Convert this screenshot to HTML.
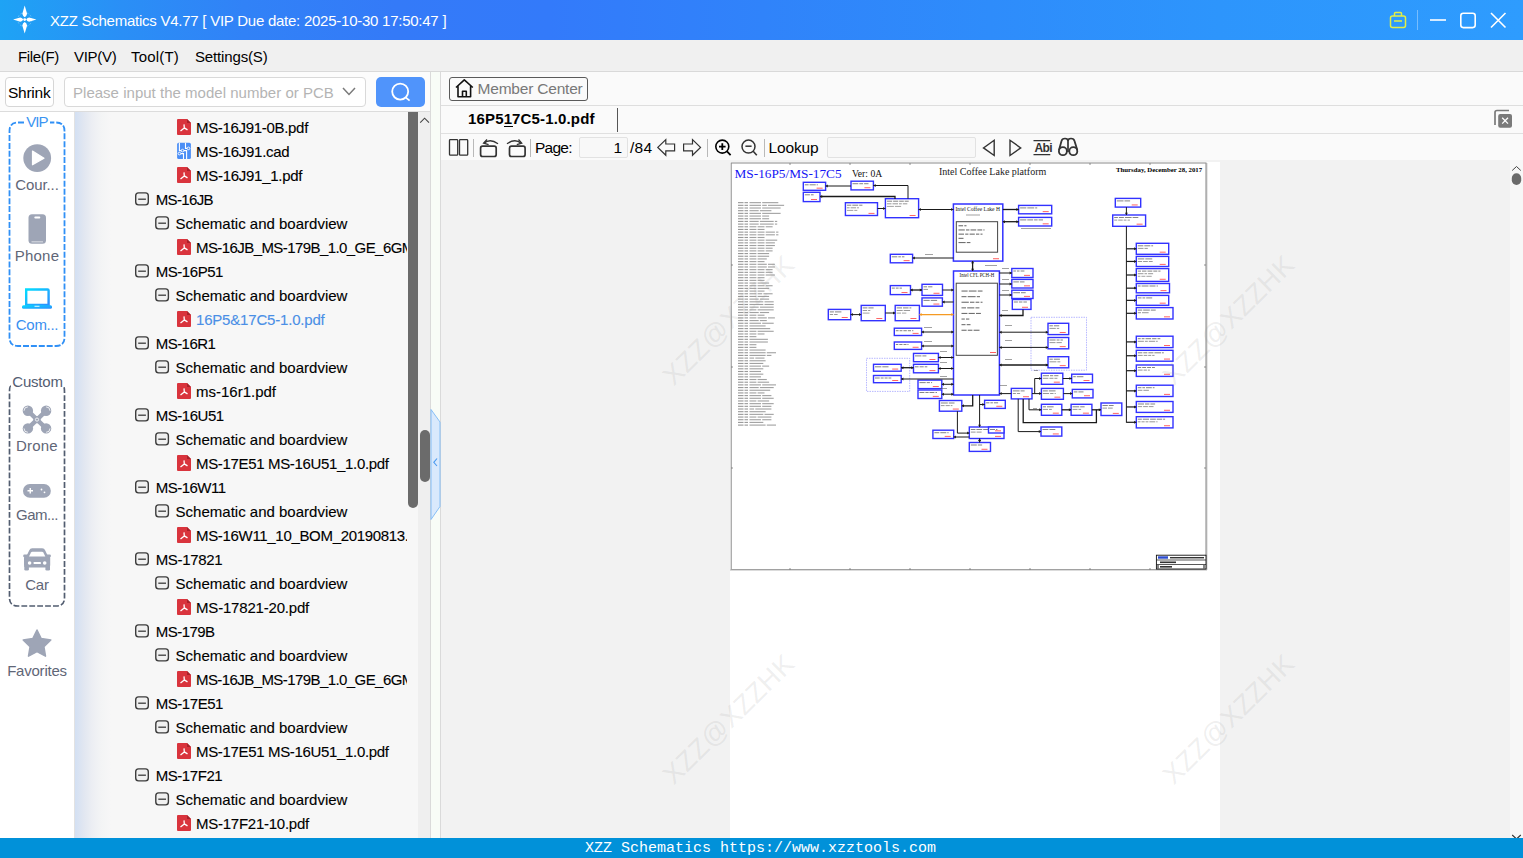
<!DOCTYPE html><html><head><meta charset="utf-8"><style>
*{margin:0;padding:0;box-sizing:border-box}
html,body{width:1523px;height:858px;overflow:hidden;background:#f0f0f0;font-family:"Liberation Sans",sans-serif;color:#000}
.a{position:absolute}
.t{position:absolute;white-space:nowrap;line-height:1}
svg{position:absolute;overflow:visible}
#title{left:0;top:0;width:1523px;height:40px;background:linear-gradient(90deg,#1ea3f5 0%,#2a8ff6 8%,#3182f7 16%,#347af8 26%,#337afa 36%,#3083fa 50%,#2e8cfb 65%,#2d95fc 80%,#2e9cfe 100%)}
#menu{left:0;top:40px;width:1523px;height:32px;background:#f0f0f0;border-bottom:1px solid #d9d9d9}
.menu{font-size:15px;top:49px;color:#000}
#ltool{left:0;top:72px;width:430px;height:40px;background:#fcfcfc;border-bottom:1px solid #dcdcdc}
#side{left:0;top:112px;width:74px;height:726px;background:#fff}
#tree{left:74px;top:112px;width:356px;height:726px;border-left:1px solid #e2e2e2;background:linear-gradient(90deg,#d3e0f3 0px,#e0e6f1 8px,#eceef3 17px,#f3f4f5 26px,#f7f7f7 36px,#f7f7f7 100%)}
#strip{left:430px;top:72px;width:11px;height:766px;background:#f8fcf7;border-left:1px solid #dadada;border-right:1px solid #dadada}
#rtop{left:441px;top:72px;width:1082px;height:88px;background:#fafafa}
#view{left:441px;top:160px;width:1069px;height:678px;background:#f2f2f2}
#vscroll{left:1510px;top:160px;width:13px;height:678px;background:#f7f7f7}
#status{left:0;top:838px;width:1523px;height:20px;background:#0191d9}
.row{position:absolute;font-size:15px;line-height:1;white-space:nowrap;-webkit-text-stroke:0.12px currentColor}
.sl{position:absolute;font-size:15px;line-height:1;white-space:nowrap;color:#5f6677;text-align:center;width:74px;left:0}
</style></head><body>
<div id="title" class="a"></div>
<svg style="left:0;top:0" width="50" height="39" viewBox="0 0 50 39">
<circle cx="24.7" cy="19.6" r="7" fill="none" stroke="rgba(255,255,255,0.35)" stroke-width="0.8" stroke-dasharray="2 1.5"/>
<path d="M24.7 5.6 L27.1 13.8 Q26.6 16.2 24.7 17.2 Q22.8 16.2 22.3 13.8 Z M24.7 33.6 L27.1 25.4 Q26.6 23 24.7 22 Q22.8 23 22.3 25.4 Z M13.1 19.6 L20.3 17.4 Q22.5 17.8 23.2 19.6 Q22.5 21.4 20.3 21.8 Z M36.4 19.6 L29.1 17.4 Q26.9 17.8 26.2 19.6 Q26.9 21.4 29.1 21.8 Z" fill="#fff"/>
<circle cx="24.7" cy="19.6" r="1.4" fill="#fff"/>
</svg>
<div class="t" style="left:50px;top:13.3px;font-size:15px;color:#fff;letter-spacing:-0.25px">XZZ Schematics V4.77 [ VIP Due date: 2025-10-30 17:50:47 ]</div>
<svg style="left:1380px;top:0" width="143" height="39" viewBox="1380 0 143 39">
<rect x="1390.5" y="16" width="15" height="11.5" rx="2" fill="none" stroke="#e3ef45" stroke-width="1.5"/>
<path d="M1394.5 16 V13.5 Q1394.5 12.5 1395.5 12.5 H1400.5 Q1401.5 12.5 1401.5 13.5 V16" fill="none" stroke="#e3ef45" stroke-width="1.5"/>
<line x1="1394" y1="21" x2="1402" y2="21" stroke="#e3ef45" stroke-width="1.5"/>
<line x1="1417.5" y1="10" x2="1417.5" y2="30" stroke="rgba(255,255,255,0.35)" stroke-width="1"/>
<line x1="1430" y1="20" x2="1446" y2="20" stroke="#fff" stroke-width="1.6"/>
<rect x="1460.8" y="13.2" width="14.4" height="14.4" rx="2.5" fill="none" stroke="#fff" stroke-width="1.6"/>
<path d="M1491 13 L1505.5 27.5 M1505.5 13 L1491 27.5" stroke="#fff" stroke-width="1.6"/>
</svg>
<div id="menu" class="a"></div>
<div class="t menu" style="left:18px;letter-spacing:-0.35px">File(F)</div>
<div class="t menu" style="left:74px;letter-spacing:-0.3px">VIP(V)</div>
<div class="t menu" style="left:131px;letter-spacing:0.2px">Tool(T)</div>
<div class="t menu" style="left:195px;letter-spacing:-0.15px">Settings(S)</div>
<div id="ltool" class="a"></div>
<div class="a" style="left:5px;top:77px;width:49px;height:30px;border:1px solid #d6d6d6;border-radius:4px;background:#fff"></div>
<div class="t" style="left:8px;top:85px;font-size:15.5px;letter-spacing:-0.25px">Shrink</div>
<div class="a" style="left:64px;top:77px;width:302px;height:30px;border:1px solid #d9d9d9;border-radius:4px;background:#fff"></div>
<div class="t" style="left:73px;top:85px;font-size:15px;color:#b4b4b4;letter-spacing:0.02px">Please input the model number or PCB</div>
<svg style="left:340px;top:84px" width="18" height="14" viewBox="340 84 18 14"><path d="M343 88 L349 94.5 L355 88" fill="none" stroke="#7a7a7a" stroke-width="1.5"/></svg>
<div class="a" style="left:376px;top:77px;width:49px;height:30px;border-radius:5px;background:#5094fb"></div>
<svg style="left:376px;top:77px" width="49" height="30" viewBox="376 77 49 30"><circle cx="400.2" cy="91.6" r="8" fill="none" stroke="#fff" stroke-width="1.8"/><line x1="405.6" y1="97.4" x2="409.6" y2="100.6" stroke="#fff" stroke-width="1.8"/></svg>
<div id="side" class="a"></div>
<svg style="left:0;top:112px" width="74" height="560" viewBox="0 112 74 560">
<path d="M24 122.5 H18 Q9.5 122.5 9.5 131 V337.5 Q9.5 346 18 346 H56 Q64.5 346 64.5 337.5 V131 Q64.5 122.5 56 122.5 H50" fill="none" stroke="#3090f6" stroke-width="1.8" stroke-dasharray="6 1.9"/>
<path d="M11 386 Q9.5 386 9.5 392 V598 Q9.5 606 18 606 H56 Q64.5 606 64.5 598 V392 Q64.5 386 63 386" fill="none" stroke="#525d70" stroke-width="1.7" stroke-dasharray="5.8 2.1"/>
<circle cx="37.2" cy="158.1" r="13.9" fill="#9ea5b6"/>
<path d="M32.5 151 L44 158.3 L32.5 164.8 Z" fill="#fff" stroke="#fff" stroke-width="1.2" stroke-linejoin="round"/>
<rect x="28.5" y="214.3" width="17.5" height="29.4" rx="3.5" fill="#9ea5b6"/>
<rect x="34.3" y="216.5" width="6" height="2" rx="1" fill="#fff"/>
<rect x="31.5" y="241.4" width="11.5" height="0.9" fill="#e4e6ec"/>
<defs><linearGradient id="lg" x1="0" x2="1" y1="0" y2="1"><stop offset="0" stop-color="#04dcff"/><stop offset="1" stop-color="#2e8cff"/></linearGradient></defs>
<path d="M26.2 289.5 H47.6 Q48.6 289.5 48.6 290.5 V305 H26.2 Z" fill="none" stroke="url(#lg)" stroke-width="2.4"/>
<rect x="22" y="305.3" width="30" height="3.4" rx="1.5" fill="url(#lg)"/>
<rect x="34.5" y="305.8" width="5" height="0.9" fill="#fff"/>
<g stroke="#9ea5b6" stroke-width="4.4" stroke-linecap="round"><line x1="28" y1="410.8" x2="46" y2="428.3"/><line x1="46" y1="410.8" x2="28" y2="428.3"/></g>
<g fill="#9ea5b6"><circle cx="27.9" cy="410.8" r="5.2"/><circle cx="46.1" cy="410.8" r="5.2"/><circle cx="27.9" cy="428.4" r="5.2"/><circle cx="46.1" cy="428.4" r="5.2"/><circle cx="37" cy="419.6" r="3.6"/></g>
<g fill="none" stroke="#fff" stroke-width="0.8"><path d="M24 410.8 A3.9 3.9 0 0 1 27.9 406.9"/><path d="M46.1 406.9 A3.9 3.9 0 0 1 50 410.8"/><path d="M24 428.4 A3.9 3.9 0 0 0 27.9 432.3"/><path d="M50 428.4 A3.9 3.9 0 0 1 46.1 432.3"/><circle cx="37" cy="419.6" r="1.6"/></g>
<rect x="23" y="484" width="27.8" height="13.7" rx="6.8" fill="#9ea5b6"/>
<path d="M27.5 490.8 H33 M30.25 488 V493.6" stroke="#fff" stroke-width="1.4"/>
<circle cx="41.5" cy="489.5" r="0.9" fill="#fff"/><circle cx="44.5" cy="492.3" r="0.9" fill="#fff"/>
<path d="M26.5 556 L29.3 550.3 Q30 548.3 32.2 548.3 H42.2 Q44.4 548.3 45.1 550.3 L47.9 556 Z" fill="#9ea5b6"/>
<rect x="23.2" y="554.6" width="27.7" height="2.6" rx="1.2" fill="#9ea5b6"/>
<rect x="24" y="555.5" width="26.2" height="12" rx="2.5" fill="#9ea5b6"/>
<rect x="24.3" y="565" width="4.6" height="5.6" rx="1.3" fill="#9ea5b6"/><rect x="45.4" y="565" width="4.6" height="5.6" rx="1.3" fill="#9ea5b6"/>
<path d="M29 556.6 L31 552.6 Q31.4 551.8 32.3 551.8 H42 Q42.9 551.8 43.3 552.6 L45.3 556.6 Z" fill="#fff"/>
<circle cx="29.6" cy="563" r="1.8" fill="#fff"/><circle cx="44.7" cy="563" r="1.8" fill="#fff"/>
<rect x="33.6" y="562" width="7.3" height="2" rx="0.6" fill="#fff"/>
<path d="M37 630 L41.2 638.6 L50.8 640 L43.9 646.7 L45.5 656.2 L37 651.7 L28.5 656.2 L30.1 646.7 L23.2 640 L32.8 638.6 Z" fill="#9ea5b6" stroke="#9ea5b6" stroke-width="1.5" stroke-linejoin="round"/>
</svg>
<div class="sl" style="top:114.0px;color:#3a94f2;font-size:15px;left:0px;letter-spacing:-0.9px"><span style="background:#fff;padding:0 1px">VIP</span></div>
<div class="sl" style="top:177.1px;color:#5f6677;letter-spacing:-0.1px">Cour...</div>
<div class="sl" style="top:247.9px;color:#5f6677;letter-spacing:0.2px">Phone</div>
<div class="sl" style="top:317.3px;color:#3a8ff0;letter-spacing:-0.3px">Com...</div>
<div class="sl" style="top:437.5px;color:#5f6677;letter-spacing:0.2px">Drone</div>
<div class="sl" style="top:507.2px;color:#5f6677;letter-spacing:-0.5px">Gam...</div>
<div class="sl" style="top:576.7px;color:#5f6677;letter-spacing:-0.2px">Car</div>
<div class="sl" style="top:662.7px;color:#5f6677;letter-spacing:-0.22px">Favorites</div>
<div class="sl" style="top:374.4px;color:#535d72;letter-spacing:-0.2px;left:0.5px"><span style="background:#fff;padding:0 0px">Custom</span></div>
<div id="tree" class="a"></div>
<div class="a" style="left:74px;top:112px;width:333px;height:726px;overflow:hidden">
<div class="row" style="left:122.0px;top:7.8px;color:#000;letter-spacing:-0.315px">MS-16J91-0B.pdf</div>
<div class="row" style="left:122.0px;top:31.8px;color:#000;letter-spacing:-0.278px">MS-16J91.cad</div>
<div class="row" style="left:122.0px;top:55.8px;color:#000;letter-spacing:-0.279px">MS-16J91_1.pdf</div>
<div class="row" style="left:81.7px;top:79.8px;color:#000;letter-spacing:-0.637px">MS-16JB</div>
<div class="row" style="left:101.6px;top:103.8px;color:#000;letter-spacing:0.003px">Schematic and boardview</div>
<div class="row" style="left:122.0px;top:127.8px;color:#000;letter-spacing:-0.575px">MS-16JB_MS-179B_1.0_GE_6GM_BOM.pdf</div>
<div class="row" style="left:81.7px;top:151.8px;color:#000;letter-spacing:-0.448px">MS-16P51</div>
<div class="row" style="left:101.6px;top:175.8px;color:#000;letter-spacing:0.003px">Schematic and boardview</div>
<div class="row" style="left:122.0px;top:199.8px;color:#4a8fe6;letter-spacing:-0.189px">16P5&amp;17C5-1.0.pdf</div>
<div class="row" style="left:81.7px;top:223.8px;color:#000;letter-spacing:-0.531px">MS-16R1</div>
<div class="row" style="left:101.6px;top:247.8px;color:#000;letter-spacing:0.003px">Schematic and boardview</div>
<div class="row" style="left:122.0px;top:271.8px;color:#000;letter-spacing:0.001px">ms-16r1.pdf</div>
<div class="row" style="left:81.7px;top:295.8px;color:#000;letter-spacing:-0.459px">MS-16U51</div>
<div class="row" style="left:101.6px;top:319.8px;color:#000;letter-spacing:0.003px">Schematic and boardview</div>
<div class="row" style="left:122.0px;top:343.8px;color:#000;letter-spacing:-0.335px">MS-17E51 MS-16U51_1.0.pdf</div>
<div class="row" style="left:81.7px;top:367.8px;color:#000;letter-spacing:-0.503px">MS-16W11</div>
<div class="row" style="left:101.6px;top:391.8px;color:#000;letter-spacing:0.003px">Schematic and boardview</div>
<div class="row" style="left:122.0px;top:415.8px;color:#000;letter-spacing:-0.320px">MS-16W11_10_BOM_20190813.pdf</div>
<div class="row" style="left:81.7px;top:439.8px;color:#000;letter-spacing:-0.312px">MS-17821</div>
<div class="row" style="left:101.6px;top:463.8px;color:#000;letter-spacing:0.003px">Schematic and boardview</div>
<div class="row" style="left:122.0px;top:487.8px;color:#000;letter-spacing:-0.187px">MS-17821-20.pdf</div>
<div class="row" style="left:81.7px;top:511.8px;color:#000;letter-spacing:-0.518px">MS-179B</div>
<div class="row" style="left:101.6px;top:535.8px;color:#000;letter-spacing:0.003px">Schematic and boardview</div>
<div class="row" style="left:122.0px;top:559.8px;color:#000;letter-spacing:-0.575px">MS-16JB_MS-179B_1.0_GE_6GM_BOM.pdf</div>
<div class="row" style="left:81.7px;top:583.8px;color:#000;letter-spacing:-0.448px">MS-17E51</div>
<div class="row" style="left:101.6px;top:607.8px;color:#000;letter-spacing:0.003px">Schematic and boardview</div>
<div class="row" style="left:122.0px;top:631.8px;color:#000;letter-spacing:-0.335px">MS-17E51 MS-16U51_1.0.pdf</div>
<div class="row" style="left:81.7px;top:655.8px;color:#000;letter-spacing:-0.437px">MS-17F21</div>
<div class="row" style="left:101.6px;top:679.8px;color:#000;letter-spacing:0.003px">Schematic and boardview</div>
<div class="row" style="left:122.0px;top:703.8px;color:#000;letter-spacing:-0.254px">MS-17F21-10.pdf</div>
</div>
<svg style="left:0;top:0" width="430" height="858" viewBox="0 0 430 858"><path d="M177.0 119.9 Q177.0 118.9 178.0 118.9 H187.0 L191.0 122.9 V133.9 Q191.0 134.9 190.0 134.9 H178.0 Q177.0 134.9 177.0 133.9 Z" fill="#d9343d"/><path d="M187.0 118.9 V122.9 H191.0 Z" fill="#a8222a"/><path d="M184.0 124.4 L184.3 127.9 M184.3 127.9 L180.5 130.9 M184.3 127.9 L187.5 129.9" stroke="#fff" stroke-width="1.3" fill="none"/><rect x="177.1" y="142.7" width="13.8" height="16.2" rx="1.5" fill="#4b8ef5"/><path d="M179.4 142.7 V150.6 H186.6 V158.9 M185.5 142.7 V148.4 H187.0 M180.8 153.6 H183.5 V158.9" stroke="#fff" stroke-width="1.1" fill="none"/><circle cx="182.5" cy="150.6" r="1.3" fill="#4b8ef5" stroke="#fff" stroke-width="0.9"/><circle cx="188.5" cy="148.4" r="1.3" fill="#4b8ef5" stroke="#fff" stroke-width="0.9"/><circle cx="179.4" cy="153.6" r="1.3" fill="#4b8ef5" stroke="#fff" stroke-width="0.9"/><path d="M177.0 167.9 Q177.0 166.9 178.0 166.9 H187.0 L191.0 170.9 V181.9 Q191.0 182.9 190.0 182.9 H178.0 Q177.0 182.9 177.0 181.9 Z" fill="#d9343d"/><path d="M187.0 166.9 V170.9 H191.0 Z" fill="#a8222a"/><path d="M184.0 172.4 L184.3 175.9 M184.3 175.9 L180.5 178.9 M184.3 175.9 L187.5 177.9" stroke="#fff" stroke-width="1.3" fill="none"/><rect x="135.7" y="192.9" width="12.6" height="12" rx="2.8" fill="#f0f0f0" stroke="#3c3c3c" stroke-width="1.4"/><line x1="138.2" y1="199.2" x2="145.9" y2="199.2" stroke="#3c3c3c" stroke-width="1.3"/><rect x="155.8" y="216.9" width="12.6" height="12" rx="2.8" fill="#f0f0f0" stroke="#3c3c3c" stroke-width="1.4"/><line x1="158.3" y1="223.2" x2="166.0" y2="223.2" stroke="#3c3c3c" stroke-width="1.3"/><path d="M177.0 239.9 Q177.0 238.9 178.0 238.9 H187.0 L191.0 242.9 V253.9 Q191.0 254.9 190.0 254.9 H178.0 Q177.0 254.9 177.0 253.9 Z" fill="#d9343d"/><path d="M187.0 238.9 V242.9 H191.0 Z" fill="#a8222a"/><path d="M184.0 244.4 L184.3 247.9 M184.3 247.9 L180.5 250.9 M184.3 247.9 L187.5 249.9" stroke="#fff" stroke-width="1.3" fill="none"/><rect x="135.7" y="264.9" width="12.6" height="12" rx="2.8" fill="#f0f0f0" stroke="#3c3c3c" stroke-width="1.4"/><line x1="138.2" y1="271.2" x2="145.9" y2="271.2" stroke="#3c3c3c" stroke-width="1.3"/><rect x="155.8" y="288.9" width="12.6" height="12" rx="2.8" fill="#f0f0f0" stroke="#3c3c3c" stroke-width="1.4"/><line x1="158.3" y1="295.2" x2="166.0" y2="295.2" stroke="#3c3c3c" stroke-width="1.3"/><path d="M177.0 311.9 Q177.0 310.9 178.0 310.9 H187.0 L191.0 314.9 V325.9 Q191.0 326.9 190.0 326.9 H178.0 Q177.0 326.9 177.0 325.9 Z" fill="#d9343d"/><path d="M187.0 310.9 V314.9 H191.0 Z" fill="#a8222a"/><path d="M184.0 316.4 L184.3 319.9 M184.3 319.9 L180.5 322.9 M184.3 319.9 L187.5 321.9" stroke="#fff" stroke-width="1.3" fill="none"/><rect x="135.7" y="336.9" width="12.6" height="12" rx="2.8" fill="#f0f0f0" stroke="#3c3c3c" stroke-width="1.4"/><line x1="138.2" y1="343.2" x2="145.9" y2="343.2" stroke="#3c3c3c" stroke-width="1.3"/><rect x="155.8" y="360.9" width="12.6" height="12" rx="2.8" fill="#f0f0f0" stroke="#3c3c3c" stroke-width="1.4"/><line x1="158.3" y1="367.2" x2="166.0" y2="367.2" stroke="#3c3c3c" stroke-width="1.3"/><path d="M177.0 383.9 Q177.0 382.9 178.0 382.9 H187.0 L191.0 386.9 V397.9 Q191.0 398.9 190.0 398.9 H178.0 Q177.0 398.9 177.0 397.9 Z" fill="#d9343d"/><path d="M187.0 382.9 V386.9 H191.0 Z" fill="#a8222a"/><path d="M184.0 388.4 L184.3 391.9 M184.3 391.9 L180.5 394.9 M184.3 391.9 L187.5 393.9" stroke="#fff" stroke-width="1.3" fill="none"/><rect x="135.7" y="408.9" width="12.6" height="12" rx="2.8" fill="#f0f0f0" stroke="#3c3c3c" stroke-width="1.4"/><line x1="138.2" y1="415.2" x2="145.9" y2="415.2" stroke="#3c3c3c" stroke-width="1.3"/><rect x="155.8" y="432.9" width="12.6" height="12" rx="2.8" fill="#f0f0f0" stroke="#3c3c3c" stroke-width="1.4"/><line x1="158.3" y1="439.2" x2="166.0" y2="439.2" stroke="#3c3c3c" stroke-width="1.3"/><path d="M177.0 455.9 Q177.0 454.9 178.0 454.9 H187.0 L191.0 458.9 V469.9 Q191.0 470.9 190.0 470.9 H178.0 Q177.0 470.9 177.0 469.9 Z" fill="#d9343d"/><path d="M187.0 454.9 V458.9 H191.0 Z" fill="#a8222a"/><path d="M184.0 460.4 L184.3 463.9 M184.3 463.9 L180.5 466.9 M184.3 463.9 L187.5 465.9" stroke="#fff" stroke-width="1.3" fill="none"/><rect x="135.7" y="480.9" width="12.6" height="12" rx="2.8" fill="#f0f0f0" stroke="#3c3c3c" stroke-width="1.4"/><line x1="138.2" y1="487.2" x2="145.9" y2="487.2" stroke="#3c3c3c" stroke-width="1.3"/><rect x="155.8" y="504.9" width="12.6" height="12" rx="2.8" fill="#f0f0f0" stroke="#3c3c3c" stroke-width="1.4"/><line x1="158.3" y1="511.2" x2="166.0" y2="511.2" stroke="#3c3c3c" stroke-width="1.3"/><path d="M177.0 527.9 Q177.0 526.9 178.0 526.9 H187.0 L191.0 530.9 V541.9 Q191.0 542.9 190.0 542.9 H178.0 Q177.0 542.9 177.0 541.9 Z" fill="#d9343d"/><path d="M187.0 526.9 V530.9 H191.0 Z" fill="#a8222a"/><path d="M184.0 532.4 L184.3 535.9 M184.3 535.9 L180.5 538.9 M184.3 535.9 L187.5 537.9" stroke="#fff" stroke-width="1.3" fill="none"/><rect x="135.7" y="552.9" width="12.6" height="12" rx="2.8" fill="#f0f0f0" stroke="#3c3c3c" stroke-width="1.4"/><line x1="138.2" y1="559.2" x2="145.9" y2="559.2" stroke="#3c3c3c" stroke-width="1.3"/><rect x="155.8" y="576.9" width="12.6" height="12" rx="2.8" fill="#f0f0f0" stroke="#3c3c3c" stroke-width="1.4"/><line x1="158.3" y1="583.2" x2="166.0" y2="583.2" stroke="#3c3c3c" stroke-width="1.3"/><path d="M177.0 599.9 Q177.0 598.9 178.0 598.9 H187.0 L191.0 602.9 V613.9 Q191.0 614.9 190.0 614.9 H178.0 Q177.0 614.9 177.0 613.9 Z" fill="#d9343d"/><path d="M187.0 598.9 V602.9 H191.0 Z" fill="#a8222a"/><path d="M184.0 604.4 L184.3 607.9 M184.3 607.9 L180.5 610.9 M184.3 607.9 L187.5 609.9" stroke="#fff" stroke-width="1.3" fill="none"/><rect x="135.7" y="624.9" width="12.6" height="12" rx="2.8" fill="#f0f0f0" stroke="#3c3c3c" stroke-width="1.4"/><line x1="138.2" y1="631.2" x2="145.9" y2="631.2" stroke="#3c3c3c" stroke-width="1.3"/><rect x="155.8" y="648.9" width="12.6" height="12" rx="2.8" fill="#f0f0f0" stroke="#3c3c3c" stroke-width="1.4"/><line x1="158.3" y1="655.2" x2="166.0" y2="655.2" stroke="#3c3c3c" stroke-width="1.3"/><path d="M177.0 671.9 Q177.0 670.9 178.0 670.9 H187.0 L191.0 674.9 V685.9 Q191.0 686.9 190.0 686.9 H178.0 Q177.0 686.9 177.0 685.9 Z" fill="#d9343d"/><path d="M187.0 670.9 V674.9 H191.0 Z" fill="#a8222a"/><path d="M184.0 676.4 L184.3 679.9 M184.3 679.9 L180.5 682.9 M184.3 679.9 L187.5 681.9" stroke="#fff" stroke-width="1.3" fill="none"/><rect x="135.7" y="696.9" width="12.6" height="12" rx="2.8" fill="#f0f0f0" stroke="#3c3c3c" stroke-width="1.4"/><line x1="138.2" y1="703.2" x2="145.9" y2="703.2" stroke="#3c3c3c" stroke-width="1.3"/><rect x="155.8" y="720.9" width="12.6" height="12" rx="2.8" fill="#f0f0f0" stroke="#3c3c3c" stroke-width="1.4"/><line x1="158.3" y1="727.2" x2="166.0" y2="727.2" stroke="#3c3c3c" stroke-width="1.3"/><path d="M177.0 743.9 Q177.0 742.9 178.0 742.9 H187.0 L191.0 746.9 V757.9 Q191.0 758.9 190.0 758.9 H178.0 Q177.0 758.9 177.0 757.9 Z" fill="#d9343d"/><path d="M187.0 742.9 V746.9 H191.0 Z" fill="#a8222a"/><path d="M184.0 748.4 L184.3 751.9 M184.3 751.9 L180.5 754.9 M184.3 751.9 L187.5 753.9" stroke="#fff" stroke-width="1.3" fill="none"/><rect x="135.7" y="768.9" width="12.6" height="12" rx="2.8" fill="#f0f0f0" stroke="#3c3c3c" stroke-width="1.4"/><line x1="138.2" y1="775.2" x2="145.9" y2="775.2" stroke="#3c3c3c" stroke-width="1.3"/><rect x="155.8" y="792.9" width="12.6" height="12" rx="2.8" fill="#f0f0f0" stroke="#3c3c3c" stroke-width="1.4"/><line x1="158.3" y1="799.2" x2="166.0" y2="799.2" stroke="#3c3c3c" stroke-width="1.3"/><path d="M177.0 815.9 Q177.0 814.9 178.0 814.9 H187.0 L191.0 818.9 V829.9 Q191.0 830.9 190.0 830.9 H178.0 Q177.0 830.9 177.0 829.9 Z" fill="#d9343d"/><path d="M187.0 814.9 V818.9 H191.0 Z" fill="#a8222a"/><path d="M184.0 820.4 L184.3 823.9 M184.3 823.9 L180.5 826.9 M184.3 823.9 L187.5 825.9" stroke="#fff" stroke-width="1.3" fill="none"/></svg>
<div class="a" style="left:417.5px;top:112px;width:13px;height:726px;background:#efefef"></div>
<div class="a" style="left:407.5px;top:112px;width:10px;height:395.5px;background:#6b6b6b;border-radius:0 0 5px 5px"></div>
<div class="a" style="left:419.5px;top:429.5px;width:10px;height:52px;background:#6b6b6b;border-radius:5px"></div>
<svg style="left:415px;top:112px" width="16" height="14" viewBox="415 112 16 14"><path d="M420.2 122.6 L424.6 118.2 L429 122.6" fill="none" stroke="#444" stroke-width="1.1"/></svg>
<div id="strip" class="a"></div>
<svg style="left:430px;top:400px" width="12" height="130" viewBox="430 400 12 130"><path d="M431 409.5 L440 422 V506.5 L431 519.5 Z" fill="#d9e9fc" stroke="#7cb9f6" stroke-width="0.9"/><path d="M437 458.5 L433.8 462.3 L437 466" fill="none" stroke="#4a9af0" stroke-width="1.1"/></svg>
<div id="rtop" class="a"></div>
<div class="a" style="left:441px;top:105px;width:1082px;height:1px;background:#dedede"></div>
<div class="a" style="left:441px;top:133px;width:1082px;height:1px;background:#e0e0e0"></div>
<div class="a" style="left:449px;top:77px;width:139px;height:24px;border:1px solid #5a5a5a;border-radius:3px;background:#fafafa"></div>
<svg style="left:450px;top:78px" width="30" height="22" viewBox="450 78 30 22"><path d="M456 87.5 L464.3 79.8 L472.8 87.5 M458 86.2 V96.8 H470.6 V86.2 M462.5 96.8 V91.2 H466.3 V96.8" fill="none" stroke="#111" stroke-width="1.6" stroke-linejoin="round"/></svg>
<div class="t" style="left:477.5px;top:81px;font-size:15.5px;color:#787878;letter-spacing:-0.2px">Member Center</div>
<div class="t" style="left:468px;top:111px;font-size:15px;font-weight:bold;letter-spacing:0.15px">16P517C5-1.0.pdf</div>
<div class="a" style="left:504px;top:125.5px;width:9px;height:1.3px;background:#000"></div>
<div class="a" style="left:616.5px;top:108px;width:1px;height:24px;background:#555"></div>
<svg style="left:1490px;top:105px" width="26" height="28" viewBox="1490 105 26 28"><path d="M1495 125 V112.5 Q1495 110.5 1497 110.5 H1509" fill="none" stroke="#7a7a7a" stroke-width="1.7"/><rect x="1498.2" y="114" width="13.8" height="13.8" rx="2" fill="#7a7a7a"/><path d="M1502.2 117.8 L1508 123.6 M1508 117.8 L1502.2 123.6" stroke="#fff" stroke-width="1.3"/></svg>
<svg style="left:441px;top:134px" width="660" height="26" viewBox="441 134 660 26">
<g fill="none" stroke="#333" stroke-width="1.3">
<rect x="449.5" y="139.6" width="8.2" height="15.6" rx="0.8"/><rect x="459.5" y="139.6" width="8.2" height="15.6" rx="0.8"/>
<rect x="480.6" y="146.2" width="15.6" height="10.3" rx="2" stroke-width="1.7"/>
<path d="M484 143.3 Q490 138 498 143.8" stroke-width="1.3"/>
<path d="M487 139.5 L483.6 143.2 L488.6 144.6" stroke-width="1.3"/>
<rect x="509.5" y="146.2" width="15.6" height="10.3" rx="2" stroke-width="1.7"/>
<path d="M507 143.8 Q515 138 521 143.3" stroke-width="1.3"/>
<path d="M518.5 139.5 L521.7 143.2 L516.8 144.6" stroke-width="1.3"/>
<path d="M657.8 147.4 L665.8 139.6 V144 H674.6 V150.8 H665.8 V155.3 Z" stroke-width="1.2" stroke-linejoin="miter"/>
<path d="M700.5 147.4 L692.5 139.6 V144 H683.6 V150.8 H692.5 V155.3 Z" stroke-width="1.2"/>
<circle cx="722.3" cy="146.6" r="6.5" stroke="#000" stroke-width="1.6"/><path d="M727 151.3 L730.6 155.2" stroke="#000" stroke-width="1.7"/><path d="M719 146.6 H725.6 M722.3 143.3 V149.9" stroke="#000" stroke-width="1.8"/>
<circle cx="748.5" cy="146.6" r="6.5" stroke-width="1.5"/><path d="M753.2 151.3 L756.8 155.2" stroke-width="1.6"/><path d="M745.4 146.2 H751.6" stroke-width="1.5"/>
<path d="M994.2 140.3 L983.5 147.9 L994.2 155.5 Z" stroke-width="1.4"/>
<path d="M1010 140.3 L1020.7 147.9 L1010 155.5 Z" stroke-width="1.4"/>
<path d="M1033.5 140.6 H1050.3 M1033.5 154.6 H1050.3" stroke-width="1.2"/>
<path d="M1061.5 141 Q1062 138.5 1065 138.5 Q1068 138.5 1068 141 V152 M1068 141 Q1068 138.5 1071 138.5 Q1074 138.5 1074.5 141" stroke-width="1.7"/>
<circle cx="1062.9" cy="151.2" r="4" stroke-width="1.8"/><circle cx="1073.3" cy="151.2" r="4" stroke-width="1.8"/>
<path d="M1059 150 L1061.5 141 M1077.3 150 L1074.5 141" stroke-width="1.8"/>
</g>
<g fill="#b9b9b9"><rect x="473" y="139" width="1" height="18"/><rect x="530" y="139" width="1" height="18"/><rect x="707" y="139" width="1" height="18"/><rect x="764" y="139" width="1" height="18"/></g>
</svg>
<div class="t" style="left:1034.5px;top:142px;font-size:12px;font-weight:bold;color:#333;letter-spacing:-0.6px">Abi</div>
<div class="t" style="left:535px;top:140px;font-size:15.5px;letter-spacing:-0.75px">Page:</div>
<div class="a" style="left:579px;top:137px;width:49px;height:21px;border:1px solid #e2e2e2;border-radius:2px;background:#f8f8f8"></div>
<div class="t" style="left:613.5px;top:140px;font-size:15.5px">1</div>
<div class="t" style="left:630px;top:140px;font-size:15.5px;letter-spacing:0.3px">/84</div>
<div class="t" style="left:768.4px;top:140px;font-size:15.5px;letter-spacing:-0.1px">Lookup</div>
<div class="a" style="left:826.5px;top:136.5px;width:149px;height:21px;border:1px solid #e2e2e2;border-radius:2px;background:#f8f8f8"></div>
<div id="view" class="a"></div>
<div id="vscroll" class="a"></div>
<svg style="left:1510px;top:160px" width="13" height="678" viewBox="1510 160 13 678"><path d="M1512.2 170.5 L1516.5 166.5 L1520.8 170.5" fill="none" stroke="#444" stroke-width="1"/><rect x="1511.8" y="173.3" width="9.4" height="11.6" rx="4.7" fill="#6b6b6b"/><path d="M1512.2 835 L1516.5 839 L1520.8 835" fill="none" stroke="#333" stroke-width="1.1"/></svg>
<div class="a" style="left:730px;top:162px;width:490px;height:676px;background:#fff"></div>
<svg style="left:720px;top:155px" width="500" height="430" viewBox="720 155 500 430">
<rect x="731.2" y="163" width="474.8" height="406.5" fill="#fff" stroke="#8a8a8a" stroke-width="1"/>
<line x1="1206.6" y1="163" x2="1206.6" y2="570" stroke="#b0b0b0" stroke-width="1.4"/>
<line x1="730" y1="570" x2="1207" y2="570" stroke="#b8b8b8" stroke-width="1"/>
<line x1="790" y1="163" x2="790" y2="165" stroke="#777" stroke-width="0.8"/>
<line x1="790" y1="568" x2="790" y2="570" stroke="#777" stroke-width="0.8"/>
<line x1="850" y1="163" x2="850" y2="165" stroke="#777" stroke-width="0.8"/>
<line x1="850" y1="568" x2="850" y2="570" stroke="#777" stroke-width="0.8"/>
<line x1="910" y1="163" x2="910" y2="165" stroke="#777" stroke-width="0.8"/>
<line x1="910" y1="568" x2="910" y2="570" stroke="#777" stroke-width="0.8"/>
<line x1="970" y1="163" x2="970" y2="165" stroke="#777" stroke-width="0.8"/>
<line x1="970" y1="568" x2="970" y2="570" stroke="#777" stroke-width="0.8"/>
<line x1="1030" y1="163" x2="1030" y2="165" stroke="#777" stroke-width="0.8"/>
<line x1="1030" y1="568" x2="1030" y2="570" stroke="#777" stroke-width="0.8"/>
<line x1="1090" y1="163" x2="1090" y2="165" stroke="#777" stroke-width="0.8"/>
<line x1="1090" y1="568" x2="1090" y2="570" stroke="#777" stroke-width="0.8"/>
<line x1="1150" y1="163" x2="1150" y2="165" stroke="#777" stroke-width="0.8"/>
<line x1="1150" y1="568" x2="1150" y2="570" stroke="#777" stroke-width="0.8"/>
<line x1="731" y1="265" x2="733" y2="265" stroke="#777" stroke-width="0.8"/>
<line x1="1204" y1="265" x2="1206" y2="265" stroke="#777" stroke-width="0.8"/>
<line x1="731" y1="367" x2="733" y2="367" stroke="#777" stroke-width="0.8"/>
<line x1="1204" y1="367" x2="1206" y2="367" stroke="#777" stroke-width="0.8"/>
<line x1="731" y1="468" x2="733" y2="468" stroke="#777" stroke-width="0.8"/>
<line x1="1204" y1="468" x2="1206" y2="468" stroke="#777" stroke-width="0.8"/>
<text x="734.5" y="177.6" font-family="Liberation Serif" font-size="13.3" fill="#1515f5">MS-16P5/MS-17C5</text>
<text x="852" y="177" font-family="Liberation Serif" font-size="9.6" fill="#111">Ver: 0A</text>
<text x="939" y="175" font-family="Liberation Serif" font-size="10" fill="#222">Intel Coffee Lake platform</text>
<text x="1116" y="172" font-family="Liberation Serif" font-size="6.8" font-weight="bold" fill="#000">Thursday, December 28, 2017</text>
<rect x="738" y="202.10" width="5.5" height="1.1" fill="#444" opacity="0.55"/>
<rect x="744.5" y="202.10" width="3.5" height="1.1" fill="#444" opacity="0.55"/>
<rect x="749.5" y="202.10" width="11.5" height="1.1" fill="#444" opacity="0.5"/>
<rect x="762.2" y="202.10" width="16.1" height="1.1" fill="#444" opacity="0.5"/>
<rect x="738" y="204.78" width="5.5" height="1.1" fill="#444" opacity="0.55"/>
<rect x="744.5" y="204.78" width="3.5" height="1.1" fill="#444" opacity="0.55"/>
<rect x="749.5" y="204.78" width="11.5" height="1.1" fill="#444" opacity="0.5"/>
<rect x="762.2" y="204.78" width="4.6" height="1.1" fill="#444" opacity="0.5"/>
<rect x="768.0" y="204.78" width="16.1" height="1.1" fill="#444" opacity="0.5"/>
<rect x="738" y="207.46" width="5.5" height="1.1" fill="#444" opacity="0.55"/>
<rect x="744.5" y="207.46" width="3.5" height="1.1" fill="#444" opacity="0.55"/>
<rect x="749.5" y="207.46" width="11.5" height="1.1" fill="#444" opacity="0.5"/>
<rect x="762.2" y="207.46" width="18.4" height="1.1" fill="#444" opacity="0.5"/>
<rect x="738" y="210.14" width="5.5" height="1.1" fill="#444" opacity="0.55"/>
<rect x="744.5" y="210.14" width="3.5" height="1.1" fill="#444" opacity="0.55"/>
<rect x="749.5" y="210.14" width="9.2" height="1.1" fill="#444" opacity="0.5"/>
<rect x="759.9" y="210.14" width="11.5" height="1.1" fill="#444" opacity="0.5"/>
<rect x="738" y="212.82" width="5.5" height="1.1" fill="#444" opacity="0.55"/>
<rect x="744.5" y="212.82" width="3.5" height="1.1" fill="#444" opacity="0.55"/>
<rect x="749.5" y="212.82" width="11.5" height="1.1" fill="#444" opacity="0.5"/>
<rect x="762.2" y="212.82" width="18.4" height="1.1" fill="#444" opacity="0.5"/>
<rect x="738" y="215.50" width="5.5" height="1.1" fill="#444" opacity="0.55"/>
<rect x="744.5" y="215.50" width="3.5" height="1.1" fill="#444" opacity="0.55"/>
<rect x="749.5" y="215.50" width="11.5" height="1.1" fill="#444" opacity="0.5"/>
<rect x="762.2" y="215.50" width="6.9" height="1.1" fill="#444" opacity="0.5"/>
<rect x="738" y="218.18" width="5.5" height="1.1" fill="#444" opacity="0.55"/>
<rect x="744.5" y="218.18" width="3.5" height="1.1" fill="#444" opacity="0.55"/>
<rect x="749.5" y="218.18" width="11.5" height="1.1" fill="#444" opacity="0.5"/>
<rect x="762.2" y="218.18" width="6.9" height="1.1" fill="#444" opacity="0.5"/>
<rect x="738" y="220.86" width="5.5" height="1.1" fill="#444" opacity="0.55"/>
<rect x="744.5" y="220.86" width="3.5" height="1.1" fill="#444" opacity="0.55"/>
<rect x="749.5" y="220.86" width="9.2" height="1.1" fill="#444" opacity="0.5"/>
<rect x="759.9" y="220.86" width="13.8" height="1.1" fill="#444" opacity="0.5"/>
<rect x="774.9" y="220.86" width="2.3" height="1.1" fill="#444" opacity="0.5"/>
<rect x="738" y="223.54" width="5.5" height="1.1" fill="#444" opacity="0.55"/>
<rect x="744.5" y="223.54" width="3.5" height="1.1" fill="#444" opacity="0.55"/>
<rect x="749.5" y="223.54" width="9.2" height="1.1" fill="#444" opacity="0.5"/>
<rect x="759.9" y="223.54" width="13.8" height="1.1" fill="#444" opacity="0.5"/>
<rect x="774.9" y="223.54" width="2.3" height="1.1" fill="#444" opacity="0.5"/>
<rect x="738" y="226.22" width="5.5" height="1.1" fill="#444" opacity="0.55"/>
<rect x="744.5" y="226.22" width="3.5" height="1.1" fill="#444" opacity="0.55"/>
<rect x="749.5" y="226.22" width="6.9" height="1.1" fill="#444" opacity="0.5"/>
<rect x="757.6" y="226.22" width="6.9" height="1.1" fill="#444" opacity="0.5"/>
<rect x="765.7" y="226.22" width="6.9" height="1.1" fill="#444" opacity="0.5"/>
<rect x="738" y="228.90" width="5.5" height="1.1" fill="#444" opacity="0.55"/>
<rect x="744.5" y="228.90" width="3.5" height="1.1" fill="#444" opacity="0.55"/>
<rect x="749.5" y="228.90" width="6.9" height="1.1" fill="#444" opacity="0.5"/>
<rect x="757.6" y="228.90" width="6.9" height="1.1" fill="#444" opacity="0.5"/>
<rect x="738" y="231.58" width="5.5" height="1.1" fill="#444" opacity="0.55"/>
<rect x="744.5" y="231.58" width="3.5" height="1.1" fill="#444" opacity="0.55"/>
<rect x="749.5" y="231.58" width="6.9" height="1.1" fill="#444" opacity="0.5"/>
<rect x="757.6" y="231.58" width="6.9" height="1.1" fill="#444" opacity="0.5"/>
<rect x="765.7" y="231.58" width="9.2" height="1.1" fill="#444" opacity="0.5"/>
<rect x="776.1" y="231.58" width="2.3" height="1.1" fill="#444" opacity="0.5"/>
<rect x="738" y="234.26" width="5.5" height="1.1" fill="#444" opacity="0.55"/>
<rect x="744.5" y="234.26" width="3.5" height="1.1" fill="#444" opacity="0.55"/>
<rect x="749.5" y="234.26" width="6.9" height="1.1" fill="#444" opacity="0.5"/>
<rect x="757.6" y="234.26" width="6.9" height="1.1" fill="#444" opacity="0.5"/>
<rect x="765.7" y="234.26" width="9.2" height="1.1" fill="#444" opacity="0.5"/>
<rect x="776.1" y="234.26" width="2.3" height="1.1" fill="#444" opacity="0.5"/>
<rect x="738" y="236.94" width="5.5" height="1.1" fill="#444" opacity="0.55"/>
<rect x="744.5" y="236.94" width="3.5" height="1.1" fill="#444" opacity="0.55"/>
<rect x="749.5" y="236.94" width="6.9" height="1.1" fill="#444" opacity="0.5"/>
<rect x="757.6" y="236.94" width="6.9" height="1.1" fill="#444" opacity="0.5"/>
<rect x="738" y="239.62" width="5.5" height="1.1" fill="#444" opacity="0.55"/>
<rect x="744.5" y="239.62" width="3.5" height="1.1" fill="#444" opacity="0.55"/>
<rect x="749.5" y="239.62" width="6.9" height="1.1" fill="#444" opacity="0.5"/>
<rect x="757.6" y="239.62" width="6.9" height="1.1" fill="#444" opacity="0.5"/>
<rect x="765.7" y="239.62" width="11.5" height="1.1" fill="#444" opacity="0.5"/>
<rect x="738" y="242.30" width="5.5" height="1.1" fill="#444" opacity="0.55"/>
<rect x="744.5" y="242.30" width="3.5" height="1.1" fill="#444" opacity="0.55"/>
<rect x="749.5" y="242.30" width="6.9" height="1.1" fill="#444" opacity="0.5"/>
<rect x="757.6" y="242.30" width="6.9" height="1.1" fill="#444" opacity="0.5"/>
<rect x="765.7" y="242.30" width="9.2" height="1.1" fill="#444" opacity="0.5"/>
<rect x="738" y="244.98" width="5.5" height="1.1" fill="#444" opacity="0.55"/>
<rect x="744.5" y="244.98" width="3.5" height="1.1" fill="#444" opacity="0.55"/>
<rect x="749.5" y="244.98" width="6.9" height="1.1" fill="#444" opacity="0.5"/>
<rect x="757.6" y="244.98" width="6.9" height="1.1" fill="#444" opacity="0.5"/>
<rect x="765.7" y="244.98" width="9.2" height="1.1" fill="#444" opacity="0.5"/>
<rect x="738" y="247.66" width="5.5" height="1.1" fill="#444" opacity="0.55"/>
<rect x="744.5" y="247.66" width="3.5" height="1.1" fill="#444" opacity="0.55"/>
<rect x="749.5" y="247.66" width="6.9" height="1.1" fill="#444" opacity="0.5"/>
<rect x="757.6" y="247.66" width="6.9" height="1.1" fill="#444" opacity="0.5"/>
<rect x="765.7" y="247.66" width="6.9" height="1.1" fill="#444" opacity="0.5"/>
<rect x="738" y="250.34" width="5.5" height="1.1" fill="#444" opacity="0.55"/>
<rect x="744.5" y="250.34" width="3.5" height="1.1" fill="#444" opacity="0.55"/>
<rect x="749.5" y="250.34" width="6.9" height="1.1" fill="#444" opacity="0.5"/>
<rect x="757.6" y="250.34" width="6.9" height="1.1" fill="#444" opacity="0.5"/>
<rect x="765.7" y="250.34" width="6.9" height="1.1" fill="#444" opacity="0.5"/>
<rect x="738" y="253.02" width="5.5" height="1.1" fill="#444" opacity="0.55"/>
<rect x="744.5" y="253.02" width="3.5" height="1.1" fill="#444" opacity="0.55"/>
<rect x="749.5" y="253.02" width="6.9" height="1.1" fill="#444" opacity="0.5"/>
<rect x="757.6" y="253.02" width="11.5" height="1.1" fill="#444" opacity="0.5"/>
<rect x="738" y="255.70" width="5.5" height="1.1" fill="#444" opacity="0.55"/>
<rect x="744.5" y="255.70" width="3.5" height="1.1" fill="#444" opacity="0.55"/>
<rect x="749.5" y="255.70" width="6.9" height="1.1" fill="#444" opacity="0.5"/>
<rect x="757.6" y="255.70" width="11.5" height="1.1" fill="#444" opacity="0.5"/>
<rect x="738" y="258.38" width="5.5" height="1.1" fill="#444" opacity="0.55"/>
<rect x="744.5" y="258.38" width="3.5" height="1.1" fill="#444" opacity="0.55"/>
<rect x="749.5" y="258.38" width="6.9" height="1.1" fill="#444" opacity="0.5"/>
<rect x="757.6" y="258.38" width="9.2" height="1.1" fill="#444" opacity="0.5"/>
<rect x="738" y="261.06" width="5.5" height="1.1" fill="#444" opacity="0.55"/>
<rect x="744.5" y="261.06" width="3.5" height="1.1" fill="#444" opacity="0.55"/>
<rect x="749.5" y="261.06" width="6.9" height="1.1" fill="#444" opacity="0.5"/>
<rect x="757.6" y="261.06" width="6.9" height="1.1" fill="#444" opacity="0.5"/>
<rect x="738" y="263.74" width="5.5" height="1.1" fill="#444" opacity="0.55"/>
<rect x="744.5" y="263.74" width="3.5" height="1.1" fill="#444" opacity="0.55"/>
<rect x="749.5" y="263.74" width="6.9" height="1.1" fill="#444" opacity="0.5"/>
<rect x="757.6" y="263.74" width="9.2" height="1.1" fill="#444" opacity="0.5"/>
<rect x="768.0" y="263.74" width="6.9" height="1.1" fill="#444" opacity="0.5"/>
<rect x="738" y="266.42" width="5.5" height="1.1" fill="#444" opacity="0.55"/>
<rect x="744.5" y="266.42" width="3.5" height="1.1" fill="#444" opacity="0.55"/>
<rect x="749.5" y="266.42" width="6.9" height="1.1" fill="#444" opacity="0.5"/>
<rect x="757.6" y="266.42" width="9.2" height="1.1" fill="#444" opacity="0.5"/>
<rect x="768.0" y="266.42" width="6.9" height="1.1" fill="#444" opacity="0.5"/>
<rect x="738" y="269.10" width="5.5" height="1.1" fill="#444" opacity="0.55"/>
<rect x="744.5" y="269.10" width="3.5" height="1.1" fill="#444" opacity="0.55"/>
<rect x="749.5" y="269.10" width="6.9" height="1.1" fill="#444" opacity="0.5"/>
<rect x="757.6" y="269.10" width="6.9" height="1.1" fill="#444" opacity="0.5"/>
<rect x="765.7" y="269.10" width="6.9" height="1.1" fill="#444" opacity="0.5"/>
<rect x="738" y="271.78" width="5.5" height="1.1" fill="#444" opacity="0.55"/>
<rect x="744.5" y="271.78" width="3.5" height="1.1" fill="#444" opacity="0.55"/>
<rect x="749.5" y="271.78" width="6.9" height="1.1" fill="#444" opacity="0.5"/>
<rect x="757.6" y="271.78" width="6.9" height="1.1" fill="#444" opacity="0.5"/>
<rect x="765.7" y="271.78" width="6.9" height="1.1" fill="#444" opacity="0.5"/>
<rect x="738" y="274.46" width="5.5" height="1.1" fill="#444" opacity="0.55"/>
<rect x="744.5" y="274.46" width="3.5" height="1.1" fill="#444" opacity="0.55"/>
<rect x="749.5" y="274.46" width="6.9" height="1.1" fill="#444" opacity="0.5"/>
<rect x="757.6" y="274.46" width="6.9" height="1.1" fill="#444" opacity="0.5"/>
<rect x="765.7" y="274.46" width="9.2" height="1.1" fill="#444" opacity="0.5"/>
<rect x="738" y="277.14" width="5.5" height="1.1" fill="#444" opacity="0.55"/>
<rect x="744.5" y="277.14" width="3.5" height="1.1" fill="#444" opacity="0.55"/>
<rect x="749.5" y="277.14" width="6.9" height="1.1" fill="#444" opacity="0.5"/>
<rect x="757.6" y="277.14" width="6.9" height="1.1" fill="#444" opacity="0.5"/>
<rect x="738" y="279.82" width="5.5" height="1.1" fill="#444" opacity="0.55"/>
<rect x="744.5" y="279.82" width="3.5" height="1.1" fill="#444" opacity="0.55"/>
<rect x="749.5" y="279.82" width="6.9" height="1.1" fill="#444" opacity="0.5"/>
<rect x="757.6" y="279.82" width="6.9" height="1.1" fill="#444" opacity="0.5"/>
<rect x="738" y="282.50" width="5.5" height="1.1" fill="#444" opacity="0.55"/>
<rect x="744.5" y="282.50" width="3.5" height="1.1" fill="#444" opacity="0.55"/>
<rect x="749.5" y="282.50" width="6.9" height="1.1" fill="#444" opacity="0.5"/>
<rect x="757.6" y="282.50" width="11.5" height="1.1" fill="#444" opacity="0.5"/>
<rect x="738" y="285.18" width="5.5" height="1.1" fill="#444" opacity="0.55"/>
<rect x="744.5" y="285.18" width="3.5" height="1.1" fill="#444" opacity="0.55"/>
<rect x="749.5" y="285.18" width="6.9" height="1.1" fill="#444" opacity="0.5"/>
<rect x="757.6" y="285.18" width="6.9" height="1.1" fill="#444" opacity="0.5"/>
<rect x="765.7" y="285.18" width="6.9" height="1.1" fill="#444" opacity="0.5"/>
<rect x="738" y="287.86" width="5.5" height="1.1" fill="#444" opacity="0.55"/>
<rect x="744.5" y="287.86" width="3.5" height="1.1" fill="#444" opacity="0.55"/>
<rect x="749.5" y="287.86" width="6.9" height="1.1" fill="#444" opacity="0.5"/>
<rect x="757.6" y="287.86" width="11.5" height="1.1" fill="#444" opacity="0.5"/>
<rect x="738" y="290.54" width="5.5" height="1.1" fill="#444" opacity="0.55"/>
<rect x="744.5" y="290.54" width="3.5" height="1.1" fill="#444" opacity="0.55"/>
<rect x="749.5" y="290.54" width="6.9" height="1.1" fill="#444" opacity="0.5"/>
<rect x="757.6" y="290.54" width="6.9" height="1.1" fill="#444" opacity="0.5"/>
<rect x="738" y="293.22" width="5.5" height="1.1" fill="#444" opacity="0.55"/>
<rect x="744.5" y="293.22" width="3.5" height="1.1" fill="#444" opacity="0.55"/>
<rect x="749.5" y="293.22" width="6.9" height="1.1" fill="#444" opacity="0.5"/>
<rect x="757.6" y="293.22" width="4.6" height="1.1" fill="#444" opacity="0.5"/>
<rect x="763.4" y="293.22" width="9.2" height="1.1" fill="#444" opacity="0.5"/>
<rect x="738" y="295.90" width="5.5" height="1.1" fill="#444" opacity="0.55"/>
<rect x="744.5" y="295.90" width="3.5" height="1.1" fill="#444" opacity="0.55"/>
<rect x="749.5" y="295.90" width="6.9" height="1.1" fill="#444" opacity="0.5"/>
<rect x="757.6" y="295.90" width="11.5" height="1.1" fill="#444" opacity="0.5"/>
<rect x="738" y="298.58" width="5.5" height="1.1" fill="#444" opacity="0.55"/>
<rect x="744.5" y="298.58" width="3.5" height="1.1" fill="#444" opacity="0.55"/>
<rect x="749.5" y="298.58" width="9.2" height="1.1" fill="#444" opacity="0.5"/>
<rect x="759.9" y="298.58" width="9.2" height="1.1" fill="#444" opacity="0.5"/>
<rect x="738" y="301.26" width="5.5" height="1.1" fill="#444" opacity="0.55"/>
<rect x="744.5" y="301.26" width="3.5" height="1.1" fill="#444" opacity="0.55"/>
<rect x="749.5" y="301.26" width="13.8" height="1.1" fill="#444" opacity="0.5"/>
<rect x="764.5" y="301.26" width="9.2" height="1.1" fill="#444" opacity="0.5"/>
<rect x="738" y="303.94" width="5.5" height="1.1" fill="#444" opacity="0.55"/>
<rect x="744.5" y="303.94" width="3.5" height="1.1" fill="#444" opacity="0.55"/>
<rect x="749.5" y="303.94" width="13.8" height="1.1" fill="#444" opacity="0.5"/>
<rect x="764.5" y="303.94" width="9.2" height="1.1" fill="#444" opacity="0.5"/>
<rect x="738" y="306.62" width="5.5" height="1.1" fill="#444" opacity="0.55"/>
<rect x="744.5" y="306.62" width="3.5" height="1.1" fill="#444" opacity="0.55"/>
<rect x="749.5" y="306.62" width="9.2" height="1.1" fill="#444" opacity="0.5"/>
<rect x="759.9" y="306.62" width="13.8" height="1.1" fill="#444" opacity="0.5"/>
<rect x="738" y="309.30" width="5.5" height="1.1" fill="#444" opacity="0.55"/>
<rect x="744.5" y="309.30" width="3.5" height="1.1" fill="#444" opacity="0.55"/>
<rect x="749.5" y="309.30" width="6.9" height="1.1" fill="#444" opacity="0.5"/>
<rect x="757.6" y="309.30" width="16.1" height="1.1" fill="#444" opacity="0.5"/>
<rect x="738" y="311.98" width="5.5" height="1.1" fill="#444" opacity="0.55"/>
<rect x="744.5" y="311.98" width="3.5" height="1.1" fill="#444" opacity="0.55"/>
<rect x="749.5" y="311.98" width="9.2" height="1.1" fill="#444" opacity="0.5"/>
<rect x="759.9" y="311.98" width="9.2" height="1.1" fill="#444" opacity="0.5"/>
<rect x="738" y="314.66" width="5.5" height="1.1" fill="#444" opacity="0.55"/>
<rect x="744.5" y="314.66" width="3.5" height="1.1" fill="#444" opacity="0.55"/>
<rect x="749.5" y="314.66" width="6.9" height="1.1" fill="#444" opacity="0.5"/>
<rect x="757.6" y="314.66" width="6.9" height="1.1" fill="#444" opacity="0.5"/>
<rect x="738" y="317.34" width="5.5" height="1.1" fill="#444" opacity="0.55"/>
<rect x="744.5" y="317.34" width="3.5" height="1.1" fill="#444" opacity="0.55"/>
<rect x="749.5" y="317.34" width="6.9" height="1.1" fill="#444" opacity="0.5"/>
<rect x="757.6" y="317.34" width="9.2" height="1.1" fill="#444" opacity="0.5"/>
<rect x="768.0" y="317.34" width="6.9" height="1.1" fill="#444" opacity="0.5"/>
<rect x="738" y="320.02" width="5.5" height="1.1" fill="#444" opacity="0.55"/>
<rect x="744.5" y="320.02" width="3.5" height="1.1" fill="#444" opacity="0.55"/>
<rect x="749.5" y="320.02" width="9.2" height="1.1" fill="#444" opacity="0.5"/>
<rect x="759.9" y="320.02" width="6.9" height="1.1" fill="#444" opacity="0.5"/>
<rect x="738" y="322.70" width="5.5" height="1.1" fill="#444" opacity="0.55"/>
<rect x="744.5" y="322.70" width="3.5" height="1.1" fill="#444" opacity="0.55"/>
<rect x="749.5" y="322.70" width="11.5" height="1.1" fill="#444" opacity="0.5"/>
<rect x="762.2" y="322.70" width="11.5" height="1.1" fill="#444" opacity="0.5"/>
<rect x="738" y="325.38" width="5.5" height="1.1" fill="#444" opacity="0.55"/>
<rect x="744.5" y="325.38" width="3.5" height="1.1" fill="#444" opacity="0.55"/>
<rect x="749.5" y="325.38" width="16.1" height="1.1" fill="#444" opacity="0.5"/>
<rect x="738" y="328.06" width="5.5" height="1.1" fill="#444" opacity="0.55"/>
<rect x="744.5" y="328.06" width="3.5" height="1.1" fill="#444" opacity="0.55"/>
<rect x="749.5" y="328.06" width="20.7" height="1.1" fill="#444" opacity="0.5"/>
<rect x="738" y="330.74" width="5.5" height="1.1" fill="#444" opacity="0.55"/>
<rect x="744.5" y="330.74" width="3.5" height="1.1" fill="#444" opacity="0.55"/>
<rect x="749.5" y="330.74" width="6.9" height="1.1" fill="#444" opacity="0.5"/>
<rect x="757.6" y="330.74" width="16.1" height="1.1" fill="#444" opacity="0.5"/>
<rect x="738" y="333.42" width="5.5" height="1.1" fill="#444" opacity="0.55"/>
<rect x="744.5" y="333.42" width="3.5" height="1.1" fill="#444" opacity="0.55"/>
<rect x="749.5" y="333.42" width="6.9" height="1.1" fill="#444" opacity="0.5"/>
<rect x="757.6" y="333.42" width="6.9" height="1.1" fill="#444" opacity="0.5"/>
<rect x="738" y="336.10" width="5.5" height="1.1" fill="#444" opacity="0.55"/>
<rect x="744.5" y="336.10" width="3.5" height="1.1" fill="#444" opacity="0.55"/>
<rect x="749.5" y="336.10" width="6.9" height="1.1" fill="#444" opacity="0.5"/>
<rect x="738" y="338.78" width="5.5" height="1.1" fill="#444" opacity="0.55"/>
<rect x="744.5" y="338.78" width="3.5" height="1.1" fill="#444" opacity="0.55"/>
<rect x="749.5" y="338.78" width="18.4" height="1.1" fill="#444" opacity="0.5"/>
<rect x="738" y="341.46" width="5.5" height="1.1" fill="#444" opacity="0.55"/>
<rect x="744.5" y="341.46" width="3.5" height="1.1" fill="#444" opacity="0.55"/>
<rect x="749.5" y="341.46" width="18.4" height="1.1" fill="#444" opacity="0.5"/>
<rect x="738" y="344.14" width="5.5" height="1.1" fill="#444" opacity="0.55"/>
<rect x="744.5" y="344.14" width="3.5" height="1.1" fill="#444" opacity="0.55"/>
<rect x="749.5" y="344.14" width="6.9" height="1.1" fill="#444" opacity="0.5"/>
<rect x="738" y="346.82" width="5.5" height="1.1" fill="#444" opacity="0.55"/>
<rect x="744.5" y="346.82" width="3.5" height="1.1" fill="#444" opacity="0.55"/>
<rect x="749.5" y="346.82" width="6.9" height="1.1" fill="#444" opacity="0.5"/>
<rect x="738" y="349.50" width="5.5" height="1.1" fill="#444" opacity="0.55"/>
<rect x="744.5" y="349.50" width="3.5" height="1.1" fill="#444" opacity="0.55"/>
<rect x="749.5" y="349.50" width="16.1" height="1.1" fill="#444" opacity="0.5"/>
<rect x="738" y="352.18" width="5.5" height="1.1" fill="#444" opacity="0.55"/>
<rect x="744.5" y="352.18" width="3.5" height="1.1" fill="#444" opacity="0.55"/>
<rect x="749.5" y="352.18" width="16.1" height="1.1" fill="#444" opacity="0.5"/>
<rect x="766.8" y="352.18" width="9.2" height="1.1" fill="#444" opacity="0.5"/>
<rect x="738" y="354.86" width="5.5" height="1.1" fill="#444" opacity="0.55"/>
<rect x="744.5" y="354.86" width="3.5" height="1.1" fill="#444" opacity="0.55"/>
<rect x="749.5" y="354.86" width="16.1" height="1.1" fill="#444" opacity="0.5"/>
<rect x="766.8" y="354.86" width="4.6" height="1.1" fill="#444" opacity="0.5"/>
<rect x="738" y="357.54" width="5.5" height="1.1" fill="#444" opacity="0.55"/>
<rect x="744.5" y="357.54" width="3.5" height="1.1" fill="#444" opacity="0.55"/>
<rect x="749.5" y="357.54" width="4.6" height="1.1" fill="#444" opacity="0.5"/>
<rect x="755.3" y="357.54" width="9.2" height="1.1" fill="#444" opacity="0.5"/>
<rect x="738" y="360.22" width="5.5" height="1.1" fill="#444" opacity="0.55"/>
<rect x="744.5" y="360.22" width="3.5" height="1.1" fill="#444" opacity="0.55"/>
<rect x="749.5" y="360.22" width="16.1" height="1.1" fill="#444" opacity="0.5"/>
<rect x="738" y="362.90" width="5.5" height="1.1" fill="#444" opacity="0.55"/>
<rect x="744.5" y="362.90" width="3.5" height="1.1" fill="#444" opacity="0.55"/>
<rect x="749.5" y="362.90" width="13.8" height="1.1" fill="#444" opacity="0.5"/>
<rect x="738" y="365.58" width="5.5" height="1.1" fill="#444" opacity="0.55"/>
<rect x="744.5" y="365.58" width="3.5" height="1.1" fill="#444" opacity="0.55"/>
<rect x="749.5" y="365.58" width="11.5" height="1.1" fill="#444" opacity="0.5"/>
<rect x="762.2" y="365.58" width="6.9" height="1.1" fill="#444" opacity="0.5"/>
<rect x="738" y="368.26" width="5.5" height="1.1" fill="#444" opacity="0.55"/>
<rect x="744.5" y="368.26" width="3.5" height="1.1" fill="#444" opacity="0.55"/>
<rect x="749.5" y="368.26" width="13.8" height="1.1" fill="#444" opacity="0.5"/>
<rect x="738" y="370.94" width="5.5" height="1.1" fill="#444" opacity="0.55"/>
<rect x="744.5" y="370.94" width="3.5" height="1.1" fill="#444" opacity="0.55"/>
<rect x="749.5" y="370.94" width="11.5" height="1.1" fill="#444" opacity="0.5"/>
<rect x="738" y="373.62" width="5.5" height="1.1" fill="#444" opacity="0.55"/>
<rect x="744.5" y="373.62" width="3.5" height="1.1" fill="#444" opacity="0.55"/>
<rect x="749.5" y="373.62" width="13.8" height="1.1" fill="#444" opacity="0.5"/>
<rect x="738" y="376.30" width="5.5" height="1.1" fill="#444" opacity="0.55"/>
<rect x="744.5" y="376.30" width="3.5" height="1.1" fill="#444" opacity="0.55"/>
<rect x="749.5" y="376.30" width="11.5" height="1.1" fill="#444" opacity="0.5"/>
<rect x="738" y="378.98" width="5.5" height="1.1" fill="#444" opacity="0.55"/>
<rect x="744.5" y="378.98" width="3.5" height="1.1" fill="#444" opacity="0.55"/>
<rect x="749.5" y="378.98" width="6.9" height="1.1" fill="#444" opacity="0.5"/>
<rect x="757.6" y="378.98" width="9.2" height="1.1" fill="#444" opacity="0.5"/>
<rect x="738" y="381.66" width="5.5" height="1.1" fill="#444" opacity="0.55"/>
<rect x="744.5" y="381.66" width="3.5" height="1.1" fill="#444" opacity="0.55"/>
<rect x="749.5" y="381.66" width="6.9" height="1.1" fill="#444" opacity="0.5"/>
<rect x="757.6" y="381.66" width="11.5" height="1.1" fill="#444" opacity="0.5"/>
<rect x="738" y="384.34" width="5.5" height="1.1" fill="#444" opacity="0.55"/>
<rect x="744.5" y="384.34" width="3.5" height="1.1" fill="#444" opacity="0.55"/>
<rect x="749.5" y="384.34" width="11.5" height="1.1" fill="#444" opacity="0.5"/>
<rect x="762.2" y="384.34" width="13.8" height="1.1" fill="#444" opacity="0.5"/>
<rect x="738" y="387.02" width="5.5" height="1.1" fill="#444" opacity="0.55"/>
<rect x="744.5" y="387.02" width="3.5" height="1.1" fill="#444" opacity="0.55"/>
<rect x="749.5" y="387.02" width="9.2" height="1.1" fill="#444" opacity="0.5"/>
<rect x="759.9" y="387.02" width="13.8" height="1.1" fill="#444" opacity="0.5"/>
<rect x="738" y="389.70" width="5.5" height="1.1" fill="#444" opacity="0.55"/>
<rect x="744.5" y="389.70" width="3.5" height="1.1" fill="#444" opacity="0.55"/>
<rect x="749.5" y="389.70" width="20.7" height="1.1" fill="#444" opacity="0.5"/>
<rect x="738" y="392.38" width="5.5" height="1.1" fill="#444" opacity="0.55"/>
<rect x="744.5" y="392.38" width="3.5" height="1.1" fill="#444" opacity="0.55"/>
<rect x="749.5" y="392.38" width="6.9" height="1.1" fill="#444" opacity="0.5"/>
<rect x="757.6" y="392.38" width="6.9" height="1.1" fill="#444" opacity="0.5"/>
<rect x="738" y="395.06" width="5.5" height="1.1" fill="#444" opacity="0.55"/>
<rect x="744.5" y="395.06" width="3.5" height="1.1" fill="#444" opacity="0.55"/>
<rect x="749.5" y="395.06" width="11.5" height="1.1" fill="#444" opacity="0.5"/>
<rect x="762.2" y="395.06" width="9.2" height="1.1" fill="#444" opacity="0.5"/>
<rect x="738" y="397.74" width="5.5" height="1.1" fill="#444" opacity="0.55"/>
<rect x="744.5" y="397.74" width="3.5" height="1.1" fill="#444" opacity="0.55"/>
<rect x="749.5" y="397.74" width="11.5" height="1.1" fill="#444" opacity="0.5"/>
<rect x="762.2" y="397.74" width="11.5" height="1.1" fill="#444" opacity="0.5"/>
<rect x="738" y="400.42" width="5.5" height="1.1" fill="#444" opacity="0.55"/>
<rect x="744.5" y="400.42" width="3.5" height="1.1" fill="#444" opacity="0.55"/>
<rect x="749.5" y="400.42" width="6.9" height="1.1" fill="#444" opacity="0.5"/>
<rect x="757.6" y="400.42" width="11.5" height="1.1" fill="#444" opacity="0.5"/>
<rect x="738" y="403.10" width="5.5" height="1.1" fill="#444" opacity="0.55"/>
<rect x="744.5" y="403.10" width="3.5" height="1.1" fill="#444" opacity="0.55"/>
<rect x="749.5" y="403.10" width="11.5" height="1.1" fill="#444" opacity="0.5"/>
<rect x="762.2" y="403.10" width="11.5" height="1.1" fill="#444" opacity="0.5"/>
<rect x="738" y="405.78" width="5.5" height="1.1" fill="#444" opacity="0.55"/>
<rect x="744.5" y="405.78" width="3.5" height="1.1" fill="#444" opacity="0.55"/>
<rect x="749.5" y="405.78" width="11.5" height="1.1" fill="#444" opacity="0.5"/>
<rect x="762.2" y="405.78" width="9.2" height="1.1" fill="#444" opacity="0.5"/>
<rect x="738" y="408.46" width="5.5" height="1.1" fill="#444" opacity="0.55"/>
<rect x="744.5" y="408.46" width="3.5" height="1.1" fill="#444" opacity="0.55"/>
<rect x="749.5" y="408.46" width="4.6" height="1.1" fill="#444" opacity="0.5"/>
<rect x="755.3" y="408.46" width="16.1" height="1.1" fill="#444" opacity="0.5"/>
<rect x="738" y="411.14" width="5.5" height="1.1" fill="#444" opacity="0.55"/>
<rect x="744.5" y="411.14" width="3.5" height="1.1" fill="#444" opacity="0.55"/>
<rect x="749.5" y="411.14" width="16.1" height="1.1" fill="#444" opacity="0.5"/>
<rect x="738" y="413.82" width="5.5" height="1.1" fill="#444" opacity="0.55"/>
<rect x="744.5" y="413.82" width="3.5" height="1.1" fill="#444" opacity="0.55"/>
<rect x="749.5" y="413.82" width="13.8" height="1.1" fill="#444" opacity="0.5"/>
<rect x="764.5" y="413.82" width="9.2" height="1.1" fill="#444" opacity="0.5"/>
<rect x="738" y="416.50" width="5.5" height="1.1" fill="#444" opacity="0.55"/>
<rect x="744.5" y="416.50" width="3.5" height="1.1" fill="#444" opacity="0.55"/>
<rect x="749.5" y="416.50" width="6.9" height="1.1" fill="#444" opacity="0.5"/>
<rect x="757.6" y="416.50" width="13.8" height="1.1" fill="#444" opacity="0.5"/>
<rect x="738" y="419.18" width="5.5" height="1.1" fill="#444" opacity="0.55"/>
<rect x="744.5" y="419.18" width="3.5" height="1.1" fill="#444" opacity="0.55"/>
<rect x="749.5" y="419.18" width="11.5" height="1.1" fill="#444" opacity="0.5"/>
<rect x="762.2" y="419.18" width="9.2" height="1.1" fill="#444" opacity="0.5"/>
<rect x="738" y="421.86" width="5.5" height="1.1" fill="#444" opacity="0.55"/>
<rect x="744.5" y="421.86" width="3.5" height="1.1" fill="#444" opacity="0.55"/>
<rect x="749.5" y="421.86" width="13.8" height="1.1" fill="#444" opacity="0.5"/>
<rect x="738" y="424.54" width="5.5" height="1.1" fill="#444" opacity="0.55"/>
<rect x="744.5" y="424.54" width="3.5" height="1.1" fill="#444" opacity="0.55"/>
<rect x="749.5" y="424.54" width="16.1" height="1.1" fill="#444" opacity="0.5"/>
<rect x="766.8" y="424.54" width="9.2" height="1.1" fill="#444" opacity="0.5"/>
<rect x="953.4" y="204" width="49.4" height="57.1" fill="#fff" stroke="#3232ff" stroke-width="1.5"/>
<rect x="956.3" y="221.7" width="41.3" height="30.5" fill="none" stroke="#444" stroke-width="1"/>
<text x="955.5" y="210.6" font-family="Liberation Serif" font-size="6.9" fill="#111" textLength="44.5" lengthAdjust="spacingAndGlyphs">Intel Coffee Lake H</text>
<rect x="953.5" y="271" width="45.9" height="124" fill="#fff" stroke="#3232ff" stroke-width="1.5"/>
<rect x="956.2" y="283.2" width="41.2" height="72.1" fill="none" stroke="#444" stroke-width="1"/>
<text x="959.6" y="277" font-family="Liberation Serif" font-size="6.2" textLength="34.6" lengthAdjust="spacingAndGlyphs" fill="#111">Intel CFL PCH-H</text>
<rect x="958.5" y="225.2" width="4.6" height="1.1" fill="#333" opacity="0.7"/>
<rect x="964.3" y="225.2" width="2.2" height="1.1" fill="#333" opacity="0.7"/>
<rect x="958.5" y="229.4" width="6.3" height="1.1" fill="#333" opacity="0.7"/>
<rect x="966.0" y="229.4" width="3.4" height="1.1" fill="#333" opacity="0.7"/>
<rect x="970.5" y="229.4" width="5.7" height="1.1" fill="#333" opacity="0.7"/>
<rect x="977.4" y="229.4" width="4.8" height="1.1" fill="#333" opacity="0.7"/>
<rect x="983.4" y="229.4" width="1.1" height="1.1" fill="#333" opacity="0.7"/>
<rect x="958.5" y="233.6" width="5.5" height="1.1" fill="#333" opacity="0.7"/>
<rect x="965.2" y="233.6" width="3.2" height="1.1" fill="#333" opacity="0.7"/>
<rect x="969.6" y="233.6" width="5.2" height="1.1" fill="#333" opacity="0.7"/>
<rect x="976.0" y="233.6" width="3.3" height="1.1" fill="#333" opacity="0.7"/>
<rect x="980.5" y="233.6" width="2.0" height="1.1" fill="#333" opacity="0.7"/>
<rect x="958.5" y="237.8" width="5.0" height="1.1" fill="#333" opacity="0.7"/>
<rect x="958.5" y="242.0" width="7.1" height="1.1" fill="#333" opacity="0.7"/>
<rect x="966.8" y="242.0" width="3.6" height="1.1" fill="#333" opacity="0.7"/>
<rect x="961.5" y="290.5" width="6.1" height="1.1" fill="#333" opacity="0.7"/>
<rect x="968.8" y="290.5" width="7.7" height="1.1" fill="#333" opacity="0.7"/>
<rect x="977.8" y="290.5" width="4.7" height="1.1" fill="#333" opacity="0.7"/>
<rect x="961.5" y="296.1" width="5.0" height="1.1" fill="#333" opacity="0.7"/>
<rect x="967.7" y="296.1" width="7.9" height="1.1" fill="#333" opacity="0.7"/>
<rect x="976.8" y="296.1" width="3.2" height="1.1" fill="#333" opacity="0.7"/>
<rect x="961.5" y="301.7" width="7.3" height="1.1" fill="#333" opacity="0.7"/>
<rect x="970.0" y="301.7" width="4.4" height="1.1" fill="#333" opacity="0.7"/>
<rect x="975.6" y="301.7" width="3.7" height="1.1" fill="#333" opacity="0.7"/>
<rect x="980.6" y="301.7" width="1.9" height="1.1" fill="#333" opacity="0.7"/>
<rect x="961.5" y="307.3" width="4.5" height="1.1" fill="#333" opacity="0.7"/>
<rect x="967.2" y="307.3" width="7.1" height="1.1" fill="#333" opacity="0.7"/>
<rect x="975.5" y="307.3" width="3.9" height="1.1" fill="#333" opacity="0.7"/>
<rect x="961.5" y="312.9" width="5.9" height="1.1" fill="#333" opacity="0.7"/>
<rect x="968.6" y="312.9" width="6.2" height="1.1" fill="#333" opacity="0.7"/>
<rect x="976.0" y="312.9" width="4.9" height="1.1" fill="#333" opacity="0.7"/>
<rect x="961.5" y="318.5" width="3.3" height="1.1" fill="#333" opacity="0.7"/>
<rect x="966.0" y="318.5" width="3.3" height="1.1" fill="#333" opacity="0.7"/>
<rect x="961.5" y="324.1" width="4.0" height="1.1" fill="#333" opacity="0.7"/>
<rect x="966.7" y="324.1" width="3.8" height="1.1" fill="#333" opacity="0.7"/>
<rect x="961.5" y="329.7" width="5.1" height="1.1" fill="#333" opacity="0.7"/>
<rect x="967.8" y="329.7" width="4.6" height="1.1" fill="#333" opacity="0.7"/>
<rect x="973.6" y="329.7" width="5.9" height="1.1" fill="#333" opacity="0.7"/>
<rect x="993" y="258.3" width="6" height="0.9" fill="#f22" opacity="0.8"/><rect x="990" y="352" width="6" height="0.9" fill="#f22" opacity="0.8"/>
<rect x="866.5" y="358.3" width="43.2" height="33.1" fill="none" stroke="#9a9aff" stroke-width="0.7" stroke-dasharray="1.5 1"/>
<rect x="1031" y="317.3" width="55.5" height="52.9" fill="none" stroke="#9a9aff" stroke-width="0.7" stroke-dasharray="1.5 1"/>
<rect x="803.3" y="182.3" width="22.3" height="8.0" fill="#fff" stroke="#3232ff" stroke-width="1.4"/>
<rect x="804.8" y="184.3" width="3.8" height="1.0" fill="#333" opacity="0.6"/>
<rect x="809.6" y="184.3" width="6.1" height="1.0" fill="#333" opacity="0.6"/>
<rect x="816.7" y="184.3" width="1.1" height="1.0" fill="#333" opacity="0.6"/>
<rect x="816.6" y="187.7" width="6" height="0.9" fill="#ff1a1a" opacity="0.75"/>
<rect x="803.3" y="192.3" width="16.7" height="9.3" fill="#fff" stroke="#3232ff" stroke-width="1.4"/>
<rect x="804.8" y="194.3" width="5.1" height="1.0" fill="#333" opacity="0.6"/>
<rect x="810.9" y="194.3" width="2.7" height="1.0" fill="#333" opacity="0.6"/>
<rect x="811.0" y="199.0" width="6" height="0.9" fill="#ff1a1a" opacity="0.75"/>
<rect x="851" y="181.2" width="22.4" height="8.7" fill="#fff" stroke="#3232ff" stroke-width="1.4"/>
<rect x="852.5" y="183.2" width="5.8" height="1.0" fill="#333" opacity="0.6"/>
<rect x="859.3" y="183.2" width="3.8" height="1.0" fill="#333" opacity="0.6"/>
<rect x="864.1" y="183.2" width="4.4" height="1.0" fill="#333" opacity="0.6"/>
<rect x="864.4" y="187.3" width="6" height="0.9" fill="#ff1a1a" opacity="0.75"/>
<rect x="845.4" y="202.7" width="32.1" height="12.8" fill="#fff" stroke="#3232ff" stroke-width="1.4"/>
<rect x="846.9" y="204.7" width="4.4" height="1.0" fill="#333" opacity="0.6"/>
<rect x="852.3" y="204.7" width="5.9" height="1.0" fill="#333" opacity="0.6"/>
<rect x="859.2" y="204.7" width="3.2" height="1.0" fill="#333" opacity="0.6"/>
<rect x="846.9" y="207.3" width="2.7" height="1.0" fill="#333" opacity="0.5"/>
<rect x="850.6" y="207.3" width="5.5" height="1.0" fill="#333" opacity="0.5"/>
<rect x="857.1" y="207.3" width="1.8" height="1.0" fill="#333" opacity="0.5"/>
<rect x="846.9" y="209.9" width="6.4" height="1.0" fill="#333" opacity="0.45"/>
<rect x="854.3" y="209.9" width="3.0" height="1.0" fill="#333" opacity="0.45"/>
<rect x="868.5" y="212.9" width="6" height="0.9" fill="#ff1a1a" opacity="0.75"/>
<rect x="885.4" y="198.7" width="33.2" height="19.0" fill="#fff" stroke="#3232ff" stroke-width="1.4"/>
<rect x="886.9" y="200.7" width="5.2" height="1.0" fill="#333" opacity="0.6"/>
<rect x="893.1" y="200.7" width="5.1" height="1.0" fill="#333" opacity="0.6"/>
<rect x="899.2" y="200.7" width="4.6" height="1.0" fill="#333" opacity="0.6"/>
<rect x="904.7" y="200.7" width="4.0" height="1.0" fill="#333" opacity="0.6"/>
<rect x="886.9" y="203.3" width="4.6" height="1.0" fill="#333" opacity="0.5"/>
<rect x="892.5" y="203.3" width="5.5" height="1.0" fill="#333" opacity="0.5"/>
<rect x="899.0" y="203.3" width="2.8" height="1.0" fill="#333" opacity="0.5"/>
<rect x="902.8" y="203.3" width="4.5" height="1.0" fill="#333" opacity="0.5"/>
<rect x="886.9" y="205.9" width="7.0" height="1.0" fill="#333" opacity="0.45"/>
<rect x="894.9" y="205.9" width="6.2" height="1.0" fill="#333" opacity="0.45"/>
<rect x="909.6" y="215.1" width="6" height="0.9" fill="#ff1a1a" opacity="0.75"/>
<rect x="890.3" y="254.3" width="22.3" height="8.5" fill="#fff" stroke="#3232ff" stroke-width="1.4"/>
<rect x="891.8" y="256.3" width="5.5" height="1.0" fill="#333" opacity="0.6"/>
<rect x="898.3" y="256.3" width="2.6" height="1.0" fill="#333" opacity="0.6"/>
<rect x="901.9" y="256.3" width="2.5" height="1.0" fill="#333" opacity="0.6"/>
<rect x="903.6" y="260.2" width="6" height="0.9" fill="#ff1a1a" opacity="0.75"/>
<rect x="890.3" y="285.6" width="20.2" height="9.0" fill="#fff" stroke="#3232ff" stroke-width="1.4"/>
<rect x="891.8" y="287.6" width="3.0" height="1.0" fill="#333" opacity="0.6"/>
<rect x="895.8" y="287.6" width="2.8" height="1.0" fill="#333" opacity="0.6"/>
<rect x="899.6" y="287.6" width="2.3" height="1.0" fill="#333" opacity="0.6"/>
<rect x="901.5" y="292.0" width="6" height="0.9" fill="#ff1a1a" opacity="0.75"/>
<rect x="922" y="284.3" width="20.5" height="11.1" fill="#fff" stroke="#3232ff" stroke-width="1.4"/>
<rect x="923.5" y="286.3" width="3.6" height="1.0" fill="#333" opacity="0.6"/>
<rect x="928.1" y="286.3" width="4.3" height="1.0" fill="#333" opacity="0.6"/>
<rect x="923.5" y="288.9" width="4.5" height="1.0" fill="#333" opacity="0.5"/>
<rect x="933.5" y="292.8" width="6" height="0.9" fill="#ff1a1a" opacity="0.75"/>
<rect x="922" y="297.9" width="20.4" height="8.3" fill="#fff" stroke="#3232ff" stroke-width="1.4"/>
<rect x="923.5" y="299.9" width="6.2" height="1.0" fill="#333" opacity="0.6"/>
<rect x="930.7" y="299.9" width="6.4" height="1.0" fill="#333" opacity="0.6"/>
<rect x="933.4" y="303.6" width="6" height="0.9" fill="#ff1a1a" opacity="0.75"/>
<rect x="828.3" y="309.4" width="22.4" height="10.3" fill="#fff" stroke="#3232ff" stroke-width="1.4"/>
<rect x="829.8" y="311.4" width="4.1" height="1.0" fill="#333" opacity="0.6"/>
<rect x="834.9" y="311.4" width="6.5" height="1.0" fill="#333" opacity="0.6"/>
<rect x="829.8" y="314.0" width="3.3" height="1.0" fill="#333" opacity="0.5"/>
<rect x="834.1" y="314.0" width="3.5" height="1.0" fill="#333" opacity="0.5"/>
<rect x="841.7" y="317.1" width="6" height="0.9" fill="#ff1a1a" opacity="0.75"/>
<rect x="861.2" y="305.4" width="24.1" height="15.3" fill="#fff" stroke="#3232ff" stroke-width="1.4"/>
<rect x="862.7" y="307.4" width="4.7" height="1.0" fill="#333" opacity="0.6"/>
<rect x="868.4" y="307.4" width="5.2" height="1.0" fill="#333" opacity="0.6"/>
<rect x="862.7" y="310.0" width="4.4" height="1.0" fill="#333" opacity="0.5"/>
<rect x="868.1" y="310.0" width="2.2" height="1.0" fill="#333" opacity="0.5"/>
<rect x="862.7" y="312.6" width="6.8" height="1.0" fill="#333" opacity="0.45"/>
<rect x="876.3" y="318.1" width="6" height="0.9" fill="#ff1a1a" opacity="0.75"/>
<rect x="895.2" y="305.4" width="24.2" height="15.3" fill="#fff" stroke="#3232ff" stroke-width="1.4"/>
<rect x="896.7" y="307.4" width="5.3" height="1.0" fill="#333" opacity="0.6"/>
<rect x="903.0" y="307.4" width="5.5" height="1.0" fill="#333" opacity="0.6"/>
<rect x="909.5" y="307.4" width="1.8" height="1.0" fill="#333" opacity="0.6"/>
<rect x="896.7" y="310.0" width="6.0" height="1.0" fill="#333" opacity="0.5"/>
<rect x="903.7" y="310.0" width="6.4" height="1.0" fill="#333" opacity="0.5"/>
<rect x="896.7" y="312.6" width="4.3" height="1.0" fill="#333" opacity="0.45"/>
<rect x="902.0" y="312.6" width="4.3" height="1.0" fill="#333" opacity="0.45"/>
<rect x="910.4" y="318.1" width="6" height="0.9" fill="#ff1a1a" opacity="0.75"/>
<rect x="894.3" y="328.2" width="27.3" height="7.3" fill="#fff" stroke="#3232ff" stroke-width="1.4"/>
<rect x="895.8" y="330.2" width="2.8" height="1.0" fill="#333" opacity="0.6"/>
<rect x="899.6" y="330.2" width="2.8" height="1.0" fill="#333" opacity="0.6"/>
<rect x="903.4" y="330.2" width="3.4" height="1.0" fill="#333" opacity="0.6"/>
<rect x="907.8" y="330.2" width="3.2" height="1.0" fill="#333" opacity="0.6"/>
<rect x="912.1" y="330.2" width="1.2" height="1.0" fill="#333" opacity="0.6"/>
<rect x="912.6" y="332.9" width="6" height="0.9" fill="#ff1a1a" opacity="0.75"/>
<rect x="894.3" y="342" width="27.3" height="7.4" fill="#fff" stroke="#3232ff" stroke-width="1.4"/>
<rect x="895.8" y="344.0" width="2.5" height="1.0" fill="#333" opacity="0.6"/>
<rect x="899.3" y="344.0" width="3.2" height="1.0" fill="#333" opacity="0.6"/>
<rect x="903.5" y="344.0" width="3.0" height="1.0" fill="#333" opacity="0.6"/>
<rect x="907.4" y="344.0" width="1.1" height="1.0" fill="#333" opacity="0.6"/>
<rect x="912.6" y="346.8" width="6" height="0.9" fill="#ff1a1a" opacity="0.75"/>
<rect x="913.5" y="353.4" width="24.9" height="8.3" fill="#fff" stroke="#3232ff" stroke-width="1.4"/>
<rect x="915.0" y="355.4" width="6.4" height="1.0" fill="#333" opacity="0.6"/>
<rect x="922.4" y="355.4" width="4.0" height="1.0" fill="#333" opacity="0.6"/>
<rect x="929.4" y="359.1" width="6" height="0.9" fill="#ff1a1a" opacity="0.75"/>
<rect x="913.5" y="364.3" width="24.9" height="8.5" fill="#fff" stroke="#3232ff" stroke-width="1.4"/>
<rect x="915.0" y="366.3" width="3.6" height="1.0" fill="#333" opacity="0.6"/>
<rect x="919.6" y="366.3" width="4.1" height="1.0" fill="#333" opacity="0.6"/>
<rect x="924.7" y="366.3" width="2.6" height="1.0" fill="#333" opacity="0.6"/>
<rect x="929.4" y="370.2" width="6" height="0.9" fill="#ff1a1a" opacity="0.75"/>
<rect x="873.5" y="364.3" width="27.7" height="6.9" fill="#fff" stroke="#3232ff" stroke-width="1.4"/>
<rect x="875.0" y="366.3" width="6.3" height="1.0" fill="#333" opacity="0.6"/>
<rect x="882.3" y="366.3" width="6.2" height="1.0" fill="#333" opacity="0.6"/>
<rect x="892.2" y="368.6" width="6" height="0.9" fill="#ff1a1a" opacity="0.75"/>
<rect x="873.5" y="375.5" width="27.7" height="7.2" fill="#fff" stroke="#3232ff" stroke-width="1.4"/>
<rect x="875.0" y="377.5" width="4.7" height="1.0" fill="#333" opacity="0.6"/>
<rect x="880.7" y="377.5" width="2.9" height="1.0" fill="#333" opacity="0.6"/>
<rect x="884.6" y="377.5" width="3.0" height="1.0" fill="#333" opacity="0.6"/>
<rect x="888.5" y="377.5" width="2.8" height="1.0" fill="#333" opacity="0.6"/>
<rect x="892.2" y="380.1" width="6" height="0.9" fill="#ff1a1a" opacity="0.75"/>
<rect x="918" y="380.1" width="23.8" height="8.5" fill="#fff" stroke="#3232ff" stroke-width="1.4"/>
<rect x="919.5" y="382.1" width="6.2" height="1.0" fill="#333" opacity="0.6"/>
<rect x="926.7" y="382.1" width="3.2" height="1.0" fill="#333" opacity="0.6"/>
<rect x="931.0" y="382.1" width="1.1" height="1.0" fill="#333" opacity="0.6"/>
<rect x="932.8" y="386.0" width="6" height="0.9" fill="#ff1a1a" opacity="0.75"/>
<rect x="918" y="390" width="23.8" height="8.5" fill="#fff" stroke="#3232ff" stroke-width="1.4"/>
<rect x="919.5" y="392.0" width="4.9" height="1.0" fill="#333" opacity="0.6"/>
<rect x="925.4" y="392.0" width="3.2" height="1.0" fill="#333" opacity="0.6"/>
<rect x="929.5" y="392.0" width="4.9" height="1.0" fill="#333" opacity="0.6"/>
<rect x="935.5" y="392.0" width="1.5" height="1.0" fill="#333" opacity="0.6"/>
<rect x="932.8" y="395.9" width="6" height="0.9" fill="#ff1a1a" opacity="0.75"/>
<rect x="939.4" y="400.5" width="22.4" height="10.7" fill="#fff" stroke="#3232ff" stroke-width="1.4"/>
<rect x="940.9" y="402.5" width="6.9" height="1.0" fill="#333" opacity="0.6"/>
<rect x="948.8" y="402.5" width="5.7" height="1.0" fill="#333" opacity="0.6"/>
<rect x="940.9" y="405.1" width="3.7" height="1.0" fill="#333" opacity="0.5"/>
<rect x="945.6" y="405.1" width="4.2" height="1.0" fill="#333" opacity="0.5"/>
<rect x="950.7" y="405.1" width="1.7" height="1.0" fill="#333" opacity="0.5"/>
<rect x="952.8" y="408.6" width="6" height="0.9" fill="#ff1a1a" opacity="0.75"/>
<rect x="932.9" y="430.2" width="20.8" height="8.3" fill="#fff" stroke="#3232ff" stroke-width="1.4"/>
<rect x="934.4" y="432.2" width="4.9" height="1.0" fill="#333" opacity="0.6"/>
<rect x="940.3" y="432.2" width="6.0" height="1.0" fill="#333" opacity="0.6"/>
<rect x="947.3" y="432.2" width="1.3" height="1.0" fill="#333" opacity="0.6"/>
<rect x="944.7" y="435.9" width="6" height="0.9" fill="#ff1a1a" opacity="0.75"/>
<rect x="1018.6" y="205.4" width="33.1" height="8.4" fill="#fff" stroke="#3232ff" stroke-width="1.4"/>
<rect x="1020.1" y="207.4" width="6.2" height="1.0" fill="#333" opacity="0.6"/>
<rect x="1027.3" y="207.4" width="6.9" height="1.0" fill="#333" opacity="0.6"/>
<rect x="1035.2" y="207.4" width="2.0" height="1.0" fill="#333" opacity="0.6"/>
<rect x="1042.7" y="211.2" width="6" height="0.9" fill="#ff1a1a" opacity="0.75"/>
<rect x="1018.6" y="217.4" width="33.1" height="8.6" fill="#fff" stroke="#3232ff" stroke-width="1.4"/>
<rect x="1020.1" y="219.4" width="6.2" height="1.0" fill="#333" opacity="0.6"/>
<rect x="1027.3" y="219.4" width="5.8" height="1.0" fill="#333" opacity="0.6"/>
<rect x="1034.1" y="219.4" width="3.5" height="1.0" fill="#333" opacity="0.6"/>
<rect x="1038.6" y="219.4" width="4.4" height="1.0" fill="#333" opacity="0.6"/>
<rect x="1042.7" y="223.4" width="6" height="0.9" fill="#ff1a1a" opacity="0.75"/>
<rect x="1011.8" y="268.5" width="21.2" height="9.0" fill="#fff" stroke="#3232ff" stroke-width="1.4"/>
<rect x="1013.3" y="270.5" width="2.6" height="1.0" fill="#333" opacity="0.6"/>
<rect x="1016.9" y="270.5" width="2.6" height="1.0" fill="#333" opacity="0.6"/>
<rect x="1020.6" y="270.5" width="3.8" height="1.0" fill="#333" opacity="0.6"/>
<rect x="1024.0" y="274.9" width="6" height="0.9" fill="#ff1a1a" opacity="0.75"/>
<rect x="1011.8" y="279.4" width="21.2" height="8.6" fill="#fff" stroke="#3232ff" stroke-width="1.4"/>
<rect x="1013.3" y="281.4" width="5.6" height="1.0" fill="#333" opacity="0.6"/>
<rect x="1019.9" y="281.4" width="4.6" height="1.0" fill="#333" opacity="0.6"/>
<rect x="1024.0" y="285.4" width="6" height="0.9" fill="#ff1a1a" opacity="0.75"/>
<rect x="1011.8" y="290.2" width="21.2" height="8.3" fill="#fff" stroke="#3232ff" stroke-width="1.4"/>
<rect x="1013.3" y="292.2" width="6.7" height="1.0" fill="#333" opacity="0.6"/>
<rect x="1021.0" y="292.2" width="4.7" height="1.0" fill="#333" opacity="0.6"/>
<rect x="1024.0" y="295.9" width="6" height="0.9" fill="#ff1a1a" opacity="0.75"/>
<rect x="1012.3" y="299.5" width="18.7" height="9.9" fill="#fff" stroke="#3232ff" stroke-width="1.4"/>
<rect x="1013.8" y="301.5" width="4.1" height="1.0" fill="#333" opacity="0.6"/>
<rect x="1018.9" y="301.5" width="3.5" height="1.0" fill="#333" opacity="0.6"/>
<rect x="1023.4" y="301.5" width="3.5" height="1.0" fill="#333" opacity="0.6"/>
<rect x="1022.0" y="306.8" width="6" height="0.9" fill="#ff1a1a" opacity="0.75"/>
<rect x="1048" y="323.3" width="20.7" height="11.3" fill="#fff" stroke="#3232ff" stroke-width="1.4"/>
<rect x="1049.5" y="325.3" width="3.4" height="1.0" fill="#333" opacity="0.6"/>
<rect x="1053.9" y="325.3" width="5.3" height="1.0" fill="#333" opacity="0.6"/>
<rect x="1049.5" y="327.9" width="6.3" height="1.0" fill="#333" opacity="0.5"/>
<rect x="1056.8" y="327.9" width="2.4" height="1.0" fill="#333" opacity="0.5"/>
<rect x="1059.7" y="332.0" width="6" height="0.9" fill="#ff1a1a" opacity="0.75"/>
<rect x="1048" y="337.5" width="20.7" height="11.3" fill="#fff" stroke="#3232ff" stroke-width="1.4"/>
<rect x="1049.5" y="339.5" width="6.1" height="1.0" fill="#333" opacity="0.6"/>
<rect x="1056.6" y="339.5" width="2.9" height="1.0" fill="#333" opacity="0.6"/>
<rect x="1060.5" y="339.5" width="2.4" height="1.0" fill="#333" opacity="0.6"/>
<rect x="1049.5" y="342.1" width="6.0" height="1.0" fill="#333" opacity="0.5"/>
<rect x="1056.5" y="342.1" width="5.3" height="1.0" fill="#333" opacity="0.5"/>
<rect x="1059.7" y="346.2" width="6" height="0.9" fill="#ff1a1a" opacity="0.75"/>
<rect x="1048" y="356.7" width="20.7" height="11.1" fill="#fff" stroke="#3232ff" stroke-width="1.4"/>
<rect x="1049.5" y="358.7" width="3.3" height="1.0" fill="#333" opacity="0.6"/>
<rect x="1053.8" y="358.7" width="6.1" height="1.0" fill="#333" opacity="0.6"/>
<rect x="1049.5" y="361.3" width="6.9" height="1.0" fill="#333" opacity="0.5"/>
<rect x="1057.4" y="361.3" width="2.9" height="1.0" fill="#333" opacity="0.5"/>
<rect x="1059.7" y="365.2" width="6" height="0.9" fill="#ff1a1a" opacity="0.75"/>
<rect x="1011.3" y="388.4" width="20.7" height="10.5" fill="#fff" stroke="#3232ff" stroke-width="1.4"/>
<rect x="1012.8" y="390.4" width="6.8" height="1.0" fill="#333" opacity="0.6"/>
<rect x="1020.6" y="390.4" width="4.0" height="1.0" fill="#333" opacity="0.6"/>
<rect x="1012.8" y="393.0" width="3.1" height="1.0" fill="#333" opacity="0.5"/>
<rect x="1016.9" y="393.0" width="3.2" height="1.0" fill="#333" opacity="0.5"/>
<rect x="1023.0" y="396.3" width="6" height="0.9" fill="#ff1a1a" opacity="0.75"/>
<rect x="1041.4" y="373.2" width="21.4" height="11.1" fill="#fff" stroke="#3232ff" stroke-width="1.4"/>
<rect x="1042.9" y="375.2" width="6.1" height="1.0" fill="#333" opacity="0.6"/>
<rect x="1050.0" y="375.2" width="3.2" height="1.0" fill="#333" opacity="0.6"/>
<rect x="1054.2" y="375.2" width="4.2" height="1.0" fill="#333" opacity="0.6"/>
<rect x="1042.9" y="377.8" width="5.5" height="1.0" fill="#333" opacity="0.5"/>
<rect x="1049.4" y="377.8" width="4.1" height="1.0" fill="#333" opacity="0.5"/>
<rect x="1054.4" y="377.8" width="3.0" height="1.0" fill="#333" opacity="0.5"/>
<rect x="1053.8" y="381.7" width="6" height="0.9" fill="#ff1a1a" opacity="0.75"/>
<rect x="1071.7" y="374.2" width="20.8" height="8.5" fill="#fff" stroke="#3232ff" stroke-width="1.4"/>
<rect x="1073.2" y="376.2" width="2.6" height="1.0" fill="#333" opacity="0.6"/>
<rect x="1076.8" y="376.2" width="6.6" height="1.0" fill="#333" opacity="0.6"/>
<rect x="1083.5" y="380.1" width="6" height="0.9" fill="#ff1a1a" opacity="0.75"/>
<rect x="1041.4" y="388.4" width="22.0" height="10.9" fill="#fff" stroke="#3232ff" stroke-width="1.4"/>
<rect x="1042.9" y="390.4" width="4.9" height="1.0" fill="#333" opacity="0.6"/>
<rect x="1048.8" y="390.4" width="6.7" height="1.0" fill="#333" opacity="0.6"/>
<rect x="1042.9" y="393.0" width="6.2" height="1.0" fill="#333" opacity="0.5"/>
<rect x="1050.1" y="393.0" width="3.4" height="1.0" fill="#333" opacity="0.5"/>
<rect x="1054.6" y="393.0" width="1.2" height="1.0" fill="#333" opacity="0.5"/>
<rect x="1054.4" y="396.7" width="6" height="0.9" fill="#ff1a1a" opacity="0.75"/>
<rect x="1072.3" y="389.4" width="20.7" height="8.5" fill="#fff" stroke="#3232ff" stroke-width="1.4"/>
<rect x="1073.8" y="391.4" width="3.6" height="1.0" fill="#333" opacity="0.6"/>
<rect x="1078.4" y="391.4" width="5.1" height="1.0" fill="#333" opacity="0.6"/>
<rect x="1084.0" y="395.3" width="6" height="0.9" fill="#ff1a1a" opacity="0.75"/>
<rect x="1041.4" y="404.3" width="20.4" height="11.0" fill="#fff" stroke="#3232ff" stroke-width="1.4"/>
<rect x="1042.9" y="406.3" width="3.1" height="1.0" fill="#333" opacity="0.6"/>
<rect x="1047.0" y="406.3" width="6.6" height="1.0" fill="#333" opacity="0.6"/>
<rect x="1042.9" y="408.9" width="5.1" height="1.0" fill="#333" opacity="0.5"/>
<rect x="1049.0" y="408.9" width="2.8" height="1.0" fill="#333" opacity="0.5"/>
<rect x="1052.8" y="412.7" width="6" height="0.9" fill="#ff1a1a" opacity="0.75"/>
<rect x="1071.1" y="404.3" width="20.8" height="11.0" fill="#fff" stroke="#3232ff" stroke-width="1.4"/>
<rect x="1072.6" y="406.3" width="6.6" height="1.0" fill="#333" opacity="0.6"/>
<rect x="1080.2" y="406.3" width="4.4" height="1.0" fill="#333" opacity="0.6"/>
<rect x="1072.6" y="408.9" width="4.9" height="1.0" fill="#333" opacity="0.5"/>
<rect x="1078.5" y="408.9" width="2.6" height="1.0" fill="#333" opacity="0.5"/>
<rect x="1082.9" y="412.7" width="6" height="0.9" fill="#ff1a1a" opacity="0.75"/>
<rect x="984.6" y="400.3" width="20.7" height="8.1" fill="#fff" stroke="#3232ff" stroke-width="1.4"/>
<rect x="986.1" y="402.3" width="3.3" height="1.0" fill="#333" opacity="0.6"/>
<rect x="990.4" y="402.3" width="2.5" height="1.0" fill="#333" opacity="0.6"/>
<rect x="993.9" y="402.3" width="4.2" height="1.0" fill="#333" opacity="0.6"/>
<rect x="996.3" y="405.8" width="6" height="0.9" fill="#ff1a1a" opacity="0.75"/>
<rect x="969.3" y="427" width="34.7" height="11.5" fill="#fff" stroke="#3232ff" stroke-width="1.4"/>
<rect x="970.8" y="429.0" width="4.6" height="1.0" fill="#333" opacity="0.6"/>
<rect x="976.4" y="429.0" width="5.8" height="1.0" fill="#333" opacity="0.6"/>
<rect x="983.2" y="429.0" width="5.0" height="1.0" fill="#333" opacity="0.6"/>
<rect x="970.8" y="431.6" width="4.8" height="1.0" fill="#333" opacity="0.5"/>
<rect x="976.6" y="431.6" width="5.0" height="1.0" fill="#333" opacity="0.5"/>
<rect x="995.0" y="435.9" width="6" height="0.9" fill="#ff1a1a" opacity="0.75"/>
<rect x="988.5" y="427" width="15.5" height="6.0" fill="#fff" stroke="#3232ff" stroke-width="1.4"/>
<rect x="990.0" y="429.0" width="5.0" height="1.0" fill="#333" opacity="0.6"/>
<rect x="996.0" y="429.0" width="1.4" height="1.0" fill="#333" opacity="0.6"/>
<rect x="995.0" y="430.4" width="6" height="0.9" fill="#ff1a1a" opacity="0.75"/>
<rect x="969.3" y="442.5" width="21.2" height="8.9" fill="#fff" stroke="#3232ff" stroke-width="1.4"/>
<rect x="970.8" y="444.5" width="6.0" height="1.0" fill="#333" opacity="0.6"/>
<rect x="977.8" y="444.5" width="4.3" height="1.0" fill="#333" opacity="0.6"/>
<rect x="981.5" y="448.8" width="6" height="0.9" fill="#ff1a1a" opacity="0.75"/>
<rect x="1041" y="427" width="20.8" height="9.1" fill="#fff" stroke="#3232ff" stroke-width="1.4"/>
<rect x="1042.5" y="429.0" width="5.9" height="1.0" fill="#333" opacity="0.6"/>
<rect x="1049.4" y="429.0" width="5.9" height="1.0" fill="#333" opacity="0.6"/>
<rect x="1052.8" y="433.5" width="6" height="0.9" fill="#ff1a1a" opacity="0.75"/>
<rect x="1101" y="403" width="20.8" height="12.5" fill="#fff" stroke="#3232ff" stroke-width="1.4"/>
<rect x="1102.5" y="405.0" width="5.3" height="1.0" fill="#333" opacity="0.6"/>
<rect x="1108.8" y="405.0" width="4.8" height="1.0" fill="#333" opacity="0.6"/>
<rect x="1102.5" y="407.6" width="4.5" height="1.0" fill="#333" opacity="0.5"/>
<rect x="1108.0" y="407.6" width="4.7" height="1.0" fill="#333" opacity="0.5"/>
<rect x="1112.8" y="412.9" width="6" height="0.9" fill="#ff1a1a" opacity="0.75"/>
<rect x="1115.3" y="198.4" width="25.4" height="8.7" fill="#fff" stroke="#3232ff" stroke-width="1.4"/>
<rect x="1116.8" y="200.4" width="6.7" height="1.0" fill="#333" opacity="0.6"/>
<rect x="1124.5" y="200.4" width="5.6" height="1.0" fill="#333" opacity="0.6"/>
<rect x="1131.7" y="204.5" width="6" height="0.9" fill="#ff1a1a" opacity="0.75"/>
<rect x="1112.7" y="215" width="32.9" height="11.3" fill="#fff" stroke="#3232ff" stroke-width="1.4"/>
<rect x="1114.2" y="217.0" width="3.7" height="1.0" fill="#333" opacity="0.6"/>
<rect x="1118.9" y="217.0" width="5.0" height="1.0" fill="#333" opacity="0.6"/>
<rect x="1124.9" y="217.0" width="6.7" height="1.0" fill="#333" opacity="0.6"/>
<rect x="1132.6" y="217.0" width="5.7" height="1.0" fill="#333" opacity="0.6"/>
<rect x="1114.2" y="219.6" width="3.0" height="1.0" fill="#333" opacity="0.5"/>
<rect x="1118.2" y="219.6" width="4.5" height="1.0" fill="#333" opacity="0.5"/>
<rect x="1123.7" y="219.6" width="2.8" height="1.0" fill="#333" opacity="0.5"/>
<rect x="1127.6" y="219.6" width="2.3" height="1.0" fill="#333" opacity="0.5"/>
<rect x="1136.6" y="223.7" width="6" height="0.9" fill="#ff1a1a" opacity="0.75"/>
<rect x="1136.3" y="243.3" width="32.4" height="11.0" fill="#fff" stroke="#3232ff" stroke-width="1.4"/>
<rect x="1137.8" y="245.3" width="5.5" height="1.0" fill="#333" opacity="0.6"/>
<rect x="1144.3" y="245.3" width="6.0" height="1.0" fill="#333" opacity="0.6"/>
<rect x="1151.3" y="245.3" width="1.8" height="1.0" fill="#333" opacity="0.6"/>
<rect x="1137.8" y="247.9" width="5.7" height="1.0" fill="#333" opacity="0.5"/>
<rect x="1144.5" y="247.9" width="3.3" height="1.0" fill="#333" opacity="0.5"/>
<rect x="1159.7" y="251.7" width="6" height="0.9" fill="#ff1a1a" opacity="0.75"/>
<rect x="1136.3" y="256.4" width="32.4" height="10.1" fill="#fff" stroke="#3232ff" stroke-width="1.4"/>
<rect x="1137.8" y="258.4" width="6.5" height="1.0" fill="#333" opacity="0.6"/>
<rect x="1145.3" y="258.4" width="6.9" height="1.0" fill="#333" opacity="0.6"/>
<rect x="1137.8" y="261.0" width="4.3" height="1.0" fill="#333" opacity="0.5"/>
<rect x="1143.1" y="261.0" width="4.7" height="1.0" fill="#333" opacity="0.5"/>
<rect x="1148.8" y="261.0" width="3.9" height="1.0" fill="#333" opacity="0.5"/>
<rect x="1159.7" y="263.9" width="6" height="0.9" fill="#ff1a1a" opacity="0.75"/>
<rect x="1136.3" y="268.6" width="32.4" height="12.8" fill="#fff" stroke="#3232ff" stroke-width="1.4"/>
<rect x="1137.8" y="270.6" width="3.2" height="1.0" fill="#333" opacity="0.6"/>
<rect x="1142.0" y="270.6" width="4.4" height="1.0" fill="#333" opacity="0.6"/>
<rect x="1147.5" y="270.6" width="4.8" height="1.0" fill="#333" opacity="0.6"/>
<rect x="1153.3" y="270.6" width="4.0" height="1.0" fill="#333" opacity="0.6"/>
<rect x="1158.3" y="270.6" width="2.2" height="1.0" fill="#333" opacity="0.6"/>
<rect x="1137.8" y="273.2" width="5.7" height="1.0" fill="#333" opacity="0.5"/>
<rect x="1144.5" y="273.2" width="2.6" height="1.0" fill="#333" opacity="0.5"/>
<rect x="1148.1" y="273.2" width="5.0" height="1.0" fill="#333" opacity="0.5"/>
<rect x="1137.8" y="275.8" width="2.6" height="1.0" fill="#333" opacity="0.45"/>
<rect x="1141.4" y="275.8" width="4.0" height="1.0" fill="#333" opacity="0.45"/>
<rect x="1146.4" y="275.8" width="5.3" height="1.0" fill="#333" opacity="0.45"/>
<rect x="1159.7" y="278.8" width="6" height="0.9" fill="#ff1a1a" opacity="0.75"/>
<rect x="1136.3" y="283.5" width="33.2" height="9.3" fill="#fff" stroke="#3232ff" stroke-width="1.4"/>
<rect x="1137.8" y="285.5" width="2.8" height="1.0" fill="#333" opacity="0.6"/>
<rect x="1141.6" y="285.5" width="6.9" height="1.0" fill="#333" opacity="0.6"/>
<rect x="1149.5" y="285.5" width="6.0" height="1.0" fill="#333" opacity="0.6"/>
<rect x="1156.6" y="285.5" width="1.3" height="1.0" fill="#333" opacity="0.6"/>
<rect x="1160.5" y="290.2" width="6" height="0.9" fill="#ff1a1a" opacity="0.75"/>
<rect x="1136.3" y="295.4" width="32.4" height="9.9" fill="#fff" stroke="#3232ff" stroke-width="1.4"/>
<rect x="1137.8" y="297.4" width="3.7" height="1.0" fill="#333" opacity="0.6"/>
<rect x="1142.5" y="297.4" width="2.7" height="1.0" fill="#333" opacity="0.6"/>
<rect x="1146.2" y="297.4" width="6.0" height="1.0" fill="#333" opacity="0.6"/>
<rect x="1159.7" y="302.7" width="6" height="0.9" fill="#ff1a1a" opacity="0.75"/>
<rect x="1136.3" y="307.6" width="36.7" height="11.4" fill="#fff" stroke="#3232ff" stroke-width="1.4"/>
<rect x="1137.8" y="309.6" width="4.4" height="1.0" fill="#333" opacity="0.6"/>
<rect x="1143.2" y="309.6" width="6.6" height="1.0" fill="#333" opacity="0.6"/>
<rect x="1150.8" y="309.6" width="4.9" height="1.0" fill="#333" opacity="0.6"/>
<rect x="1137.8" y="312.2" width="3.2" height="1.0" fill="#333" opacity="0.5"/>
<rect x="1142.0" y="312.2" width="6.6" height="1.0" fill="#333" opacity="0.5"/>
<rect x="1164.0" y="316.4" width="6" height="0.9" fill="#ff1a1a" opacity="0.75"/>
<rect x="1136.3" y="336.2" width="36.7" height="11.4" fill="#fff" stroke="#3232ff" stroke-width="1.4"/>
<rect x="1137.8" y="338.2" width="2.9" height="1.0" fill="#333" opacity="0.6"/>
<rect x="1141.7" y="338.2" width="2.8" height="1.0" fill="#333" opacity="0.6"/>
<rect x="1145.5" y="338.2" width="5.6" height="1.0" fill="#333" opacity="0.6"/>
<rect x="1152.1" y="338.2" width="4.4" height="1.0" fill="#333" opacity="0.6"/>
<rect x="1157.5" y="338.2" width="2.8" height="1.0" fill="#333" opacity="0.6"/>
<rect x="1137.8" y="340.8" width="6.1" height="1.0" fill="#333" opacity="0.5"/>
<rect x="1144.9" y="340.8" width="2.9" height="1.0" fill="#333" opacity="0.5"/>
<rect x="1148.8" y="340.8" width="6.4" height="1.0" fill="#333" opacity="0.5"/>
<rect x="1156.1" y="340.8" width="1.6" height="1.0" fill="#333" opacity="0.5"/>
<rect x="1164.0" y="345.0" width="6" height="0.9" fill="#ff1a1a" opacity="0.75"/>
<rect x="1136.3" y="350.3" width="36.7" height="10.9" fill="#fff" stroke="#3232ff" stroke-width="1.4"/>
<rect x="1137.8" y="352.3" width="4.5" height="1.0" fill="#333" opacity="0.6"/>
<rect x="1143.3" y="352.3" width="4.0" height="1.0" fill="#333" opacity="0.6"/>
<rect x="1148.4" y="352.3" width="5.0" height="1.0" fill="#333" opacity="0.6"/>
<rect x="1154.4" y="352.3" width="6.7" height="1.0" fill="#333" opacity="0.6"/>
<rect x="1162.0" y="352.3" width="1.8" height="1.0" fill="#333" opacity="0.6"/>
<rect x="1137.8" y="354.9" width="4.9" height="1.0" fill="#333" opacity="0.5"/>
<rect x="1143.7" y="354.9" width="3.6" height="1.0" fill="#333" opacity="0.5"/>
<rect x="1148.2" y="354.9" width="3.0" height="1.0" fill="#333" opacity="0.5"/>
<rect x="1152.2" y="354.9" width="2.3" height="1.0" fill="#333" opacity="0.5"/>
<rect x="1164.0" y="358.6" width="6" height="0.9" fill="#ff1a1a" opacity="0.75"/>
<rect x="1136.3" y="365" width="36.7" height="11.4" fill="#fff" stroke="#3232ff" stroke-width="1.4"/>
<rect x="1137.8" y="367.0" width="3.4" height="1.0" fill="#333" opacity="0.6"/>
<rect x="1142.2" y="367.0" width="3.9" height="1.0" fill="#333" opacity="0.6"/>
<rect x="1147.1" y="367.0" width="3.9" height="1.0" fill="#333" opacity="0.6"/>
<rect x="1152.0" y="367.0" width="2.9" height="1.0" fill="#333" opacity="0.6"/>
<rect x="1137.8" y="369.6" width="4.8" height="1.0" fill="#333" opacity="0.5"/>
<rect x="1143.6" y="369.6" width="3.3" height="1.0" fill="#333" opacity="0.5"/>
<rect x="1147.9" y="369.6" width="1.9" height="1.0" fill="#333" opacity="0.5"/>
<rect x="1164.0" y="373.8" width="6" height="0.9" fill="#ff1a1a" opacity="0.75"/>
<rect x="1136.3" y="385.2" width="36.7" height="11.3" fill="#fff" stroke="#3232ff" stroke-width="1.4"/>
<rect x="1137.8" y="387.2" width="3.6" height="1.0" fill="#333" opacity="0.6"/>
<rect x="1142.4" y="387.2" width="2.6" height="1.0" fill="#333" opacity="0.6"/>
<rect x="1146.0" y="387.2" width="5.8" height="1.0" fill="#333" opacity="0.6"/>
<rect x="1152.8" y="387.2" width="1.7" height="1.0" fill="#333" opacity="0.6"/>
<rect x="1137.8" y="389.8" width="4.6" height="1.0" fill="#333" opacity="0.5"/>
<rect x="1143.4" y="389.8" width="5.5" height="1.0" fill="#333" opacity="0.5"/>
<rect x="1164.0" y="393.9" width="6" height="0.9" fill="#ff1a1a" opacity="0.75"/>
<rect x="1136.3" y="401.5" width="36.7" height="10.9" fill="#fff" stroke="#3232ff" stroke-width="1.4"/>
<rect x="1137.8" y="403.5" width="6.2" height="1.0" fill="#333" opacity="0.6"/>
<rect x="1145.0" y="403.5" width="4.4" height="1.0" fill="#333" opacity="0.6"/>
<rect x="1150.4" y="403.5" width="4.7" height="1.0" fill="#333" opacity="0.6"/>
<rect x="1137.8" y="406.1" width="4.3" height="1.0" fill="#333" opacity="0.5"/>
<rect x="1143.1" y="406.1" width="4.8" height="1.0" fill="#333" opacity="0.5"/>
<rect x="1148.8" y="406.1" width="4.7" height="1.0" fill="#333" opacity="0.5"/>
<rect x="1164.0" y="409.8" width="6" height="0.9" fill="#ff1a1a" opacity="0.75"/>
<rect x="1136.3" y="416.7" width="36.7" height="11.2" fill="#fff" stroke="#3232ff" stroke-width="1.4"/>
<rect x="1137.8" y="418.7" width="4.0" height="1.0" fill="#333" opacity="0.6"/>
<rect x="1142.8" y="418.7" width="6.2" height="1.0" fill="#333" opacity="0.6"/>
<rect x="1150.1" y="418.7" width="5.7" height="1.0" fill="#333" opacity="0.6"/>
<rect x="1156.8" y="418.7" width="5.4" height="1.0" fill="#333" opacity="0.6"/>
<rect x="1163.1" y="418.7" width="2.0" height="1.0" fill="#333" opacity="0.6"/>
<rect x="1137.8" y="421.3" width="2.7" height="1.0" fill="#333" opacity="0.5"/>
<rect x="1141.5" y="421.3" width="3.1" height="1.0" fill="#333" opacity="0.5"/>
<rect x="1145.6" y="421.3" width="2.8" height="1.0" fill="#333" opacity="0.5"/>
<rect x="1149.4" y="421.3" width="5.8" height="1.0" fill="#333" opacity="0.5"/>
<rect x="1156.3" y="421.3" width="1.2" height="1.0" fill="#333" opacity="0.5"/>
<rect x="1164.0" y="425.3" width="6" height="0.9" fill="#ff1a1a" opacity="0.75"/>
<path d="M851,186 L825.6,186" fill="none" stroke="#1a1a1a" stroke-width="1.0"/>
<path d="M825.6,186.0 L827.8,184.5 L827.8,187.5 Z" fill="#1a1a1a"/>
<path d="M908,198.7 L908,185.5 L873.4,185.5" fill="none" stroke="#1a1a1a" stroke-width="1.0"/>
<path d="M873.4,185.5 L875.6,184.0 L875.6,187.0 Z" fill="#1a1a1a"/>
<path d="M895,199 L895,196.5 L820,196.5" fill="none" stroke="#1a1a1a" stroke-width="1.3"/>
<path d="M820.0,196.5 L822.2,195.0 L822.2,198.0 Z" fill="#1a1a1a"/>
<path d="M877.5,208.5 L885.4,208.5" fill="none" stroke="#1a1a1a" stroke-width="1.0"/>
<path d="M885.4,208.5 L883.2,207.0 L883.2,210.0 Z" fill="#1a1a1a"/>
<path d="M918.6,209.5 L953.4,209.5" fill="none" stroke="#1a1a1a" stroke-width="1.0"/>
<path d="M918.6,209.5 L920.8,208.0 L920.8,211.0 Z" fill="#1a1a1a"/>
<path d="M953.4,209.5 L951.2,208.0 L951.2,211.0 Z" fill="#1a1a1a"/>
<path d="M953.4,258 L912.6,258" fill="none" stroke="#1a1a1a" stroke-width="1.0"/>
<path d="M912.6,258.0 L914.8,256.5 L914.8,259.5 Z" fill="#1a1a1a"/>
<path d="M910.5,290 L922,290" fill="none" stroke="#1a1a1a" stroke-width="1.3"/>
<path d="M910.5,290.0 L912.7,288.5 L912.7,291.5 Z" fill="#1a1a1a"/>
<path d="M922.0,290.0 L919.8,288.5 L919.8,291.5 Z" fill="#1a1a1a"/>
<path d="M942.5,290 L953.5,290" fill="none" stroke="#1a1a1a" stroke-width="1.0"/>
<path d="M953.5,290.0 L951.3,288.5 L951.3,291.5 Z" fill="#1a1a1a"/>
<path d="M953.5,302 L942.4,302" fill="none" stroke="#1a1a1a" stroke-width="1.0"/>
<path d="M942.4,302.0 L944.6,300.5 L944.6,303.5 Z" fill="#1a1a1a"/>
<path d="M850.7,314.6 L861.2,314.6" fill="none" stroke="#1a1a1a" stroke-width="1.0"/>
<path d="M850.7,314.6 L852.9,313.1 L852.9,316.1 Z" fill="#1a1a1a"/>
<path d="M861.2,314.6 L859.0,313.1 L859.0,316.1 Z" fill="#1a1a1a"/>
<path d="M885.3,313 L895.2,313" fill="none" stroke="#1a1a1a" stroke-width="1.0"/>
<path d="M895.2,313.0 L893.0,311.5 L893.0,314.5 Z" fill="#1a1a1a"/>
<path d="M919.4,314.6 L953.5,314.6" fill="none" stroke="#f59a23" stroke-width="1.2"/>
<path d="M919.4,314.6 L921.6,313.1 L921.6,316.1 Z" fill="#f59a23"/>
<path d="M953.5,314.6 L951.3,313.1 L951.3,316.1 Z" fill="#f59a23"/>
<path d="M921.6,332 L953.5,332" fill="none" stroke="#1a1a1a" stroke-width="1.0"/>
<path d="M921.6,332.0 L923.8,330.5 L923.8,333.5 Z" fill="#1a1a1a"/>
<path d="M953.5,332.0 L951.3,330.5 L951.3,333.5 Z" fill="#1a1a1a"/>
<path d="M921.6,346 L953.5,346" fill="none" stroke="#1a1a1a" stroke-width="1.0"/>
<path d="M921.6,346.0 L923.8,344.5 L923.8,347.5 Z" fill="#1a1a1a"/>
<path d="M953.5,346.0 L951.3,344.5 L951.3,347.5 Z" fill="#1a1a1a"/>
<path d="M938.4,357.5 L953.5,357.5" fill="none" stroke="#1a1a1a" stroke-width="1.0"/>
<path d="M938.4,357.5 L940.6,356.0 L940.6,359.0 Z" fill="#1a1a1a"/>
<path d="M953.5,357.5 L951.3,356.0 L951.3,359.0 Z" fill="#1a1a1a"/>
<path d="M901.2,367.7 L913.5,367.7" fill="none" stroke="#1a1a1a" stroke-width="1.3"/>
<path d="M901.2,367.7 L903.4,366.2 L903.4,369.2 Z" fill="#1a1a1a"/>
<path d="M913.5,367.7 L911.3,366.2 L911.3,369.2 Z" fill="#1a1a1a"/>
<path d="M938.4,368.5 L953.5,368.5" fill="none" stroke="#1a1a1a" stroke-width="1.0"/>
<path d="M938.4,368.5 L940.6,367.0 L940.6,370.0 Z" fill="#1a1a1a"/>
<path d="M953.5,368.5 L951.3,367.0 L951.3,370.0 Z" fill="#1a1a1a"/>
<path d="M953.5,379 L901.2,379" fill="none" stroke="#1a1a1a" stroke-width="1.0"/>
<path d="M901.2,379.0 L903.4,377.5 L903.4,380.5 Z" fill="#1a1a1a"/>
<path d="M941.8,384.3 L953.5,384.3" fill="none" stroke="#1a1a1a" stroke-width="1.0"/>
<path d="M941.8,384.3 L944.0,382.8 L944.0,385.8 Z" fill="#1a1a1a"/>
<path d="M953.5,384.3 L951.3,382.8 L951.3,385.8 Z" fill="#1a1a1a"/>
<path d="M941.8,394.2 L953.5,394.2" fill="none" stroke="#1a1a1a" stroke-width="1.0"/>
<path d="M941.8,394.2 L944.0,392.7 L944.0,395.7 Z" fill="#1a1a1a"/>
<path d="M953.5,394.2 L951.3,392.7 L951.3,395.7 Z" fill="#1a1a1a"/>
<path d="M972.6,261.1 L972.6,271" fill="none" stroke="#1a1a1a" stroke-width="1.3"/>
<path d="M972.6,261.1 L971.1,263.3 L974.1,263.3 Z" fill="#1a1a1a"/>
<path d="M972.6,271.0 L971.1,268.8 L974.1,268.8 Z" fill="#1a1a1a"/>
<path d="M1002.8,209.5 L1018.6,209.5" fill="none" stroke="#1a1a1a" stroke-width="1.3"/>
<path d="M1018.6,209.5 L1016.4,208.0 L1016.4,211.0 Z" fill="#1a1a1a"/>
<path d="M1002.8,221.7 L1018.6,221.7" fill="none" stroke="#1a1a1a" stroke-width="1.3"/>
<path d="M1002.8,221.7 L1005.0,220.2 L1005.0,223.2 Z" fill="#1a1a1a"/>
<path d="M1018.6,221.7 L1016.4,220.2 L1016.4,223.2 Z" fill="#1a1a1a"/>
<path d="M999.4,273 L1011.8,273" fill="none" stroke="#1a1a1a" stroke-width="1.0"/>
<path d="M1011.8,273.0 L1009.6,271.5 L1009.6,274.5 Z" fill="#1a1a1a"/>
<path d="M999.4,284 L1011.8,284" fill="none" stroke="#1a1a1a" stroke-width="1.0"/>
<path d="M1011.8,284.0 L1009.6,282.5 L1009.6,285.5 Z" fill="#1a1a1a"/>
<path d="M999.4,295 L1011.8,295" fill="none" stroke="#1a1a1a" stroke-width="1.0"/>
<path d="M1011.8,295.0 L1009.6,293.5 L1009.6,296.5 Z" fill="#1a1a1a"/>
<path d="M999.4,315.5 L1023,315.5 L1023,309.4" fill="none" stroke="#1a1a1a" stroke-width="1.3"/>
<path d="M999.4,315.5 L1001.6,314.0 L1001.6,317.0 Z" fill="#1a1a1a"/>
<path d="M999.4,332.2 L1048,332.2" fill="none" stroke="#1a1a1a" stroke-width="1.0"/>
<path d="M999.4,332.2 L1001.6,330.7 L1001.6,333.7 Z" fill="#1a1a1a"/>
<path d="M1048.0,332.2 L1045.8,330.7 L1045.8,333.7 Z" fill="#1a1a1a"/>
<path d="M999.4,347.4 L1048,347.4" fill="none" stroke="#1a1a1a" stroke-width="1.0"/>
<path d="M999.4,347.4 L1001.6,345.9 L1001.6,348.9 Z" fill="#1a1a1a"/>
<path d="M1048.0,347.4 L1045.8,345.9 L1045.8,348.9 Z" fill="#1a1a1a"/>
<path d="M999.4,365 L1048,365" fill="none" stroke="#1a1a1a" stroke-width="1.3"/>
<path d="M999.4,365.0 L1001.6,363.5 L1001.6,366.5 Z" fill="#1a1a1a"/>
<path d="M1048.0,365.0 L1045.8,363.5 L1045.8,366.5 Z" fill="#1a1a1a"/>
<path d="M1011.3,393.6 L999.4,393.6" fill="none" stroke="#1a1a1a" stroke-width="1.0"/>
<path d="M999.4,393.6 L1001.6,392.1 L1001.6,395.1 Z" fill="#1a1a1a"/>
<path d="M1032,393.6 L1041.4,393.6" fill="none" stroke="#1a1a1a" stroke-width="1.0"/>
<path d="M1041.4,393.6 L1039.2,392.1 L1039.2,395.1 Z" fill="#1a1a1a"/>
<path d="M1034.7,393.6 L1034.7,378.5 L1041.4,378.5" fill="none" stroke="#1a1a1a" stroke-width="1.0"/>
<path d="M1041.4,378.5 L1039.2,377.0 L1039.2,380.0 Z" fill="#1a1a1a"/>
<path d="M1062.8,378.5 L1071.7,378.5" fill="none" stroke="#1a1a1a" stroke-width="1.0"/>
<path d="M1071.7,378.5 L1069.5,377.0 L1069.5,380.0 Z" fill="#1a1a1a"/>
<path d="M1063.4,393.6 L1072.3,393.6" fill="none" stroke="#1a1a1a" stroke-width="1.0"/>
<path d="M1072.3,393.6 L1070.1,392.1 L1070.1,395.1 Z" fill="#1a1a1a"/>
<path d="M1061.8,409.8 L1071.1,409.8" fill="none" stroke="#1a1a1a" stroke-width="1.3"/>
<path d="M1071.1,409.8 L1068.9,408.3 L1068.9,411.3 Z" fill="#1a1a1a"/>
<path d="M1091.9,409.8 L1101,409.8" fill="none" stroke="#1a1a1a" stroke-width="1.3"/>
<path d="M1101.0,409.8 L1098.8,408.3 L1098.8,411.3 Z" fill="#1a1a1a"/>
<path d="M1018.2,398.9 L1018.2,431.6 L1041,431.6" fill="none" stroke="#1a1a1a" stroke-width="1.0"/>
<path d="M1041.0,431.6 L1038.8,430.1 L1038.8,433.1 Z" fill="#1a1a1a"/>
<path d="M1023.2,398.9 L1023.2,422.7 L1096.4,422.7 L1096.4,409.8" fill="none" stroke="#1a1a1a" stroke-width="1.3"/>
<path d="M1029,398.9 L1029,409.8 L1041.4,409.8" fill="none" stroke="#1a1a1a" stroke-width="1.0"/>
<path d="M1041.4,409.8 L1039.2,408.3 L1039.2,411.3 Z" fill="#1a1a1a"/>
<path d="M972.7,395 L972.7,405.8 L961.8,405.8" fill="none" stroke="#1a1a1a" stroke-width="1.3"/>
<path d="M961.8,405.8 L964.0,404.3 L964.0,407.3 Z" fill="#1a1a1a"/>
<path d="M979.6,395 L979.6,427" fill="none" stroke="#1a1a1a" stroke-width="1.0"/>
<path d="M979.6,427.0 L978.1,424.8 L981.1,424.8 Z" fill="#1a1a1a"/>
<path d="M979.6,404.5 L984.6,404.5" fill="none" stroke="#1a1a1a" stroke-width="1.0"/>
<path d="M984.6,404.5 L982.4,403.0 L982.4,406.0 Z" fill="#1a1a1a"/>
<path d="M957.4,411.2 L957.4,433.1 L969.3,433.1" fill="none" stroke="#1a1a1a" stroke-width="1.0"/>
<path d="M969.3,433.1 L967.1,431.6 L967.1,434.6 Z" fill="#1a1a1a"/>
<path d="M969.3,437 L953.7,437" fill="none" stroke="#1a1a1a" stroke-width="1.0"/>
<path d="M953.7,437.0 L955.9,435.5 L955.9,438.5 Z" fill="#1a1a1a"/>
<path d="M979.6,438.5 L979.6,442.5" fill="none" stroke="#1a1a1a" stroke-width="1.0"/>
<path d="M979.6,438.5 L978.1,440.7 L981.1,440.7 Z" fill="#1a1a1a"/>
<path d="M979.6,442.5 L978.1,440.3 L981.1,440.3 Z" fill="#1a1a1a"/>
<path d="M1126.4,207.1 L1126.4,215" fill="none" stroke="#1a1a1a" stroke-width="1.0"/>
<path d="M1126.4,215.0 L1124.9,212.8 L1127.9,212.8 Z" fill="#1a1a1a"/>
<path d="M1126.4,226.3 L1126.4,422.7" fill="none" stroke="#1a1a1a" stroke-width="1.0"/>
<path d="M1126.4,248.8 L1136.3,248.8" fill="none" stroke="#1a1a1a" stroke-width="1.2"/>
<path d="M1136.3,248.8 L1134.1,247.3 L1134.1,250.3 Z" fill="#1a1a1a"/>
<path d="M1126.4,261.45 L1136.3,261.45" fill="none" stroke="#1a1a1a" stroke-width="1.2"/>
<path d="M1136.3,261.4 L1134.1,259.9 L1134.1,262.9 Z" fill="#1a1a1a"/>
<path d="M1126.4,275.0 L1136.3,275.0" fill="none" stroke="#1a1a1a" stroke-width="1.2"/>
<path d="M1136.3,275.0 L1134.1,273.5 L1134.1,276.5 Z" fill="#1a1a1a"/>
<path d="M1126.4,288.15 L1136.3,288.15" fill="none" stroke="#1a1a1a" stroke-width="1.2"/>
<path d="M1136.3,288.1 L1134.1,286.6 L1134.1,289.6 Z" fill="#1a1a1a"/>
<path d="M1126.4,300.35 L1136.3,300.35" fill="none" stroke="#1a1a1a" stroke-width="1.2"/>
<path d="M1136.3,300.4 L1134.1,298.9 L1134.1,301.9 Z" fill="#1a1a1a"/>
<path d="M1126.4,313.3 L1136.3,313.3" fill="none" stroke="#1a1a1a" stroke-width="1.2"/>
<path d="M1136.3,313.3 L1134.1,311.8 L1134.1,314.8 Z" fill="#1a1a1a"/>
<path d="M1126.4,341.9 L1136.3,341.9" fill="none" stroke="#1a1a1a" stroke-width="1.2"/>
<path d="M1136.3,341.9 L1134.1,340.4 L1134.1,343.4 Z" fill="#1a1a1a"/>
<path d="M1126.4,355.75 L1136.3,355.75" fill="none" stroke="#1a1a1a" stroke-width="1.2"/>
<path d="M1136.3,355.8 L1134.1,354.2 L1134.1,357.2 Z" fill="#1a1a1a"/>
<path d="M1126.4,370.7 L1136.3,370.7" fill="none" stroke="#1a1a1a" stroke-width="1.2"/>
<path d="M1136.3,370.7 L1134.1,369.2 L1134.1,372.2 Z" fill="#1a1a1a"/>
<path d="M1126.4,390.85 L1136.3,390.85" fill="none" stroke="#1a1a1a" stroke-width="1.2"/>
<path d="M1136.3,390.9 L1134.1,389.4 L1134.1,392.4 Z" fill="#1a1a1a"/>
<path d="M1126.4,406.95 L1136.3,406.95" fill="none" stroke="#1a1a1a" stroke-width="1.2"/>
<path d="M1136.3,406.9 L1134.1,405.4 L1134.1,408.4 Z" fill="#1a1a1a"/>
<path d="M1126.4,422.29999999999995 L1136.3,422.29999999999995" fill="none" stroke="#1a1a1a" stroke-width="1.2"/>
<path d="M1136.3,422.3 L1134.1,420.8 L1134.1,423.8 Z" fill="#1a1a1a"/>
<rect x="966" y="214.5" width="14" height="1" fill="#555" opacity="0.55"/>
<rect x="1002" y="268" width="7" height="1" fill="#555" opacity="0.55"/>
<rect x="1002" y="279" width="7" height="1" fill="#555" opacity="0.55"/>
<rect x="1002" y="290" width="7" height="1" fill="#555" opacity="0.55"/>
<rect x="1002" y="310" width="6" height="1" fill="#555" opacity="0.55"/>
<rect x="1005" y="325" width="7" height="1" fill="#555" opacity="0.55"/>
<rect x="1005" y="340" width="7" height="1" fill="#555" opacity="0.55"/>
<rect x="1005" y="359" width="7" height="1" fill="#555" opacity="0.55"/>
<rect x="924" y="327" width="8" height="1" fill="#555" opacity="0.55"/>
<rect x="924" y="341" width="8" height="1" fill="#555" opacity="0.55"/>
<rect x="940" y="351" width="7" height="1" fill="#555" opacity="0.55"/>
<rect x="940" y="362" width="7" height="1" fill="#555" opacity="0.55"/>
<rect x="940" y="376" width="7" height="1" fill="#555" opacity="0.55"/>
<rect x="940" y="388" width="7" height="1" fill="#555" opacity="0.55"/>
<rect x="985" y="265" width="12" height="1" fill="#555" opacity="0.55"/>
<rect x="1021" y="228" width="30" height="1" fill="#555" opacity="0.55"/>
<rect x="925" y="254" width="8" height="1" fill="#555" opacity="0.55"/>
<rect x="1000" y="385" width="7" height="1" fill="#555" opacity="0.55"/>
<rect x="1034" y="370" width="4" height="1" fill="#555" opacity="0.55"/>
<rect x="1033" y="408" width="4" height="1" fill="#555" opacity="0.55"/>
<rect x="1156.4" y="555.2" width="49.6" height="13.8" fill="#fff" stroke="#111" stroke-width="0.9"/>
<line x1="1156.4" y1="560" x2="1206" y2="560" stroke="#111" stroke-width="0.7"/><line x1="1156.4" y1="564.5" x2="1206" y2="564.5" stroke="#111" stroke-width="0.7"/>
<rect x="1158" y="556.3" width="10" height="2.4" fill="#2a4bd0"/><rect x="1170" y="557" width="34" height="1.4" fill="#333"/><rect x="1160" y="561.5" width="16" height="1.6" fill="#333"/><rect x="1160" y="566" width="12" height="1.6" fill="#333"/><rect x="1157.5" y="565" width="1" height="3.5" fill="#111"/><rect x="1203.5" y="565" width="1" height="3.5" fill="#111"/>
</svg>
<div class="t" style="left:629px;top:307px;width:200px;text-align:center;font-size:27px;color:rgba(140,140,140,0.14);transform:rotate(-44.5deg);letter-spacing:0.5px">XZZ@XZZHK</div>
<div class="t" style="left:1129px;top:307px;width:200px;text-align:center;font-size:27px;color:rgba(140,140,140,0.14);transform:rotate(-44.5deg);letter-spacing:0.5px">XZZ@XZZHK</div>
<div class="t" style="left:629px;top:706px;width:200px;text-align:center;font-size:27px;color:rgba(140,140,140,0.14);transform:rotate(-44.5deg);letter-spacing:0.5px">XZZ@XZZHK</div>
<div class="t" style="left:1129px;top:706px;width:200px;text-align:center;font-size:27px;color:rgba(140,140,140,0.14);transform:rotate(-44.5deg);letter-spacing:0.5px">XZZ@XZZHK</div>
<div id="status" class="a"></div>
<div class="t" style="left:585px;top:840.5px;font-family:'Liberation Mono',monospace;font-size:15px;color:#fff">XZZ Schematics https://www.xzztools.com</div>
</body></html>
